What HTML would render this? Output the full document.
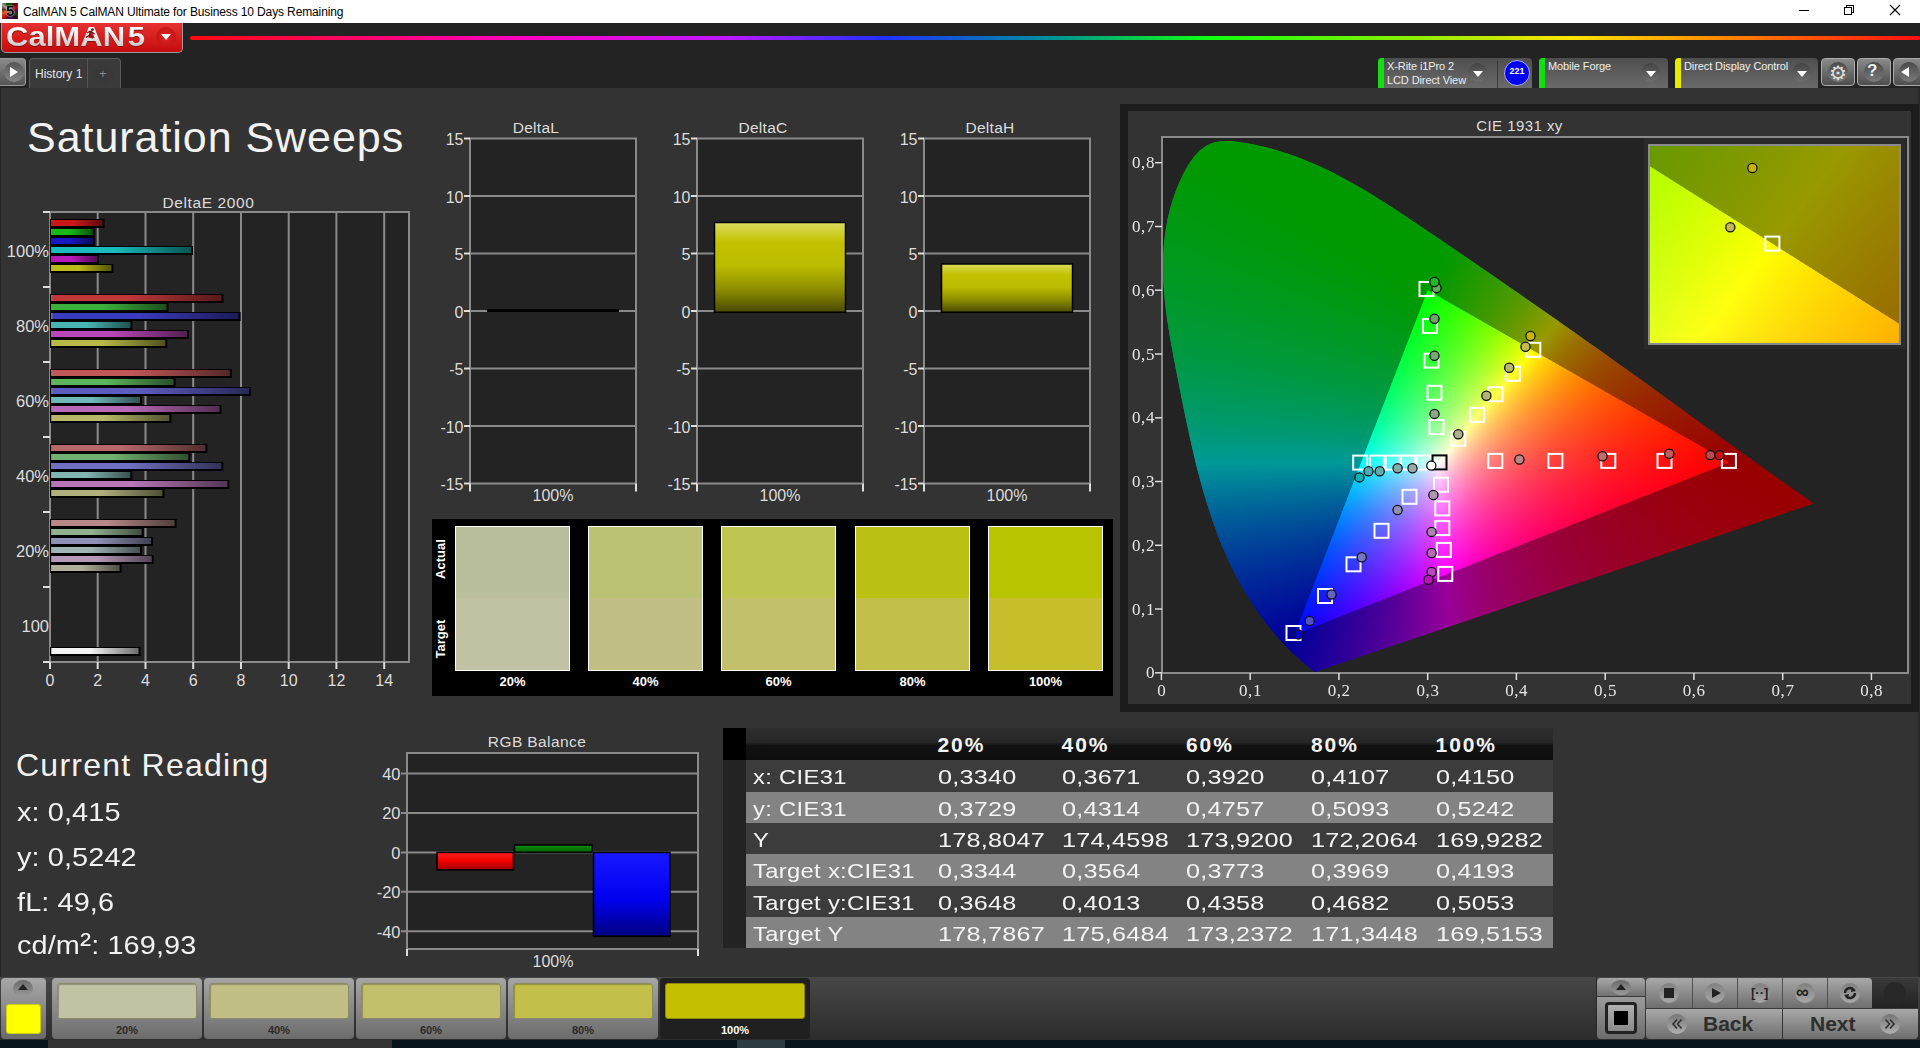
<!DOCTYPE html>
<html><head><meta charset="utf-8">
<style>
*{margin:0;padding:0;box-sizing:border-box}
html,body{width:1920px;height:1048px;overflow:hidden;background:#333;font-family:"Liberation Sans",sans-serif}
.a{position:absolute}
#titlebar{left:0;top:0;width:1920px;height:23px;background:#fff}
#hdr{left:0;top:23px;width:1920px;height:66px;background:#232323}
#main{left:0;top:88px;width:1920px;height:889px;background:#333;border-left:1px solid #262626;border-right:2px solid #2a2a2a}
.lbl{color:#ddd;font-size:14px;white-space:nowrap}
.ttl{color:#ddd;font-size:15px;white-space:nowrap}
</style></head><body>

<!-- TITLE BAR -->
<div id="titlebar" class="a">
  <div class="a" style="left:2px;top:3px;width:16px;height:16px;background:conic-gradient(from 200deg,#501010,#d01010,#e06020,#503030,#a0a0a0,#104010,#005000,#600010,#d00020,#600040,#104010,#300000,#301080,#501010)"></div>
  <div class="a" style="left:6px;top:2px;font:bold 15px 'Liberation Sans';color:#000;text-shadow:0 0 2px #dfd,0 0 1px #fff">5</div>
  <div class="a" style="left:23px;top:5px;font-size:12px;color:#000;white-space:nowrap;letter-spacing:-0.13px">CalMAN 5 CalMAN Ultimate for Business 10 Days Remaining</div>
  <div class="a" style="left:1799px;top:10px;width:10px;height:1px;background:#000"></div>
  <div class="a" style="left:1846px;top:5px;width:8px;height:8px;border:1px solid #000"></div>
  <div class="a" style="left:1844px;top:7px;width:8px;height:8px;border:1px solid #000;background:#fff"></div>
  <svg class="a" style="left:1889px;top:4px" width="12" height="12"><path d="M1 1L11 11M11 1L1 11" stroke="#000" stroke-width="1.1"/></svg>
</div>

<!-- HEADER -->
<div id="hdr" class="a">
  <div class="a" style="left:1px;top:0;width:182px;height:30px;border-radius:0 0 5px 5px;background:linear-gradient(#e43232,#d41a1a 60%,#c40c0c);border:1px solid #9a9a9a;border-top:none"></div>
  <div class="a" style="left:6px;top:-1px;font:bold 27.5px 'Liberation Sans';line-height:32px;color:#8a0a0a;transform:scaleX(1.13);transform-origin:0 0;white-space:nowrap">CalMAN&#8202;5</div>
  <div class="a" style="left:6px;top:-2px;font:bold 27.5px 'Liberation Sans';line-height:32px;transform:scaleX(1.13);transform-origin:0 0;white-space:nowrap;background:linear-gradient(#fcfcfc 30%,#c4c4c4 85%);-webkit-background-clip:text;background-clip:text;-webkit-text-fill-color:transparent;color:transparent">CalMAN&#8202;5</div>
  <svg class="a" style="left:84px;top:5px" width="12" height="11" viewBox="0 0 12 11"><circle cx="8.5" cy="1.6" r="1.4" fill="#7a0a0a"/><path d="M3 5L6 3.2L8.5 4.5L10.5 6M6.5 3.5L5.5 7L2 9.5M5.5 7L8 8.5L8.5 10.5" stroke="#7a0a0a" stroke-width="1.4" fill="none"/></svg>
  <div class="a" style="left:156px;top:4px;width:20px;height:20px;border-radius:50%;background:radial-gradient(#d22,#b11)"></div>
  <svg class="a" style="left:160px;top:10px" width="12" height="8"><path d="M1 1L11 1L6 7Z" fill="#fff"/></svg>
  <div class="a" style="left:190px;top:13px;width:1730px;height:4px;border-radius:2px;background:linear-gradient(90deg,#ff0a10 0%,#ff00c0 19%,#c018ff 31%,#2030ff 40%,#00909a 49.7%,#10ff10 58.8%,#a8ec00 73.3%,#ffe400 79.8%,#ff8400 89%,#ff1010 100%)"></div>
  <!-- tab row -->
  <div class="a" style="left:0;top:35px;width:26px;height:28px;border-radius:0 4px 4px 0;background:linear-gradient(#8a8a8a,#555);border:1px solid #999;border-left:none"></div>
  <div class="a" style="left:4px;top:39px;width:20px;height:20px;border-radius:50%;background:linear-gradient(#555,#888)"></div>
  <svg class="a" style="left:9px;top:43px" width="10" height="12"><path d="M1 1L9 6L1 11Z" fill="#fff"/></svg>
  <div class="a" style="left:29px;top:35px;width:92px;height:31px;border-radius:4px 4px 0 0;background:#3a3a3a;border:1px solid #5a5a5a;border-bottom:none"></div>
  <div class="a" style="left:87px;top:36px;width:1px;height:30px;background:#555"></div>
  <div class="a" style="left:35px;top:44px;font-size:12px;color:#e6e6e6">History 1</div>
  <div class="a" style="left:94px;top:42px;width:19px;height:19px;border-radius:50%;background:#383838"></div>
  <div class="a" style="left:99px;top:43px;font-size:13px;color:#888">+</div>
</div>

<div id="main" class="a"></div>
<div class="a" style="left:27px;top:113px;font-size:43px;color:#f2f2f2;white-space:nowrap;letter-spacing:0.95px">Saturation Sweeps</div>
<svg class="a" style="left:0;top:190px" width="430" height="520" viewBox="0 190 430 520"><defs><linearGradient id="de0" x1="0" x2="1" y1="0" y2="0"><stop offset="0" stop-color="#fff" stop-opacity="0.35"/><stop offset="0.01" stop-color="#c81818" stop-opacity="1"/><stop offset="0.45" stop-color="#c81818"/><stop offset="1" stop-color="#5a0a0a"/></linearGradient><linearGradient id="de1" x1="0" x2="1" y1="0" y2="0"><stop offset="0" stop-color="#fff" stop-opacity="0.35"/><stop offset="0.01" stop-color="#18b818" stop-opacity="1"/><stop offset="0.45" stop-color="#18b818"/><stop offset="1" stop-color="#0a520a"/></linearGradient><linearGradient id="de2" x1="0" x2="1" y1="0" y2="0"><stop offset="0" stop-color="#fff" stop-opacity="0.35"/><stop offset="0.01" stop-color="#1818c4" stop-opacity="1"/><stop offset="0.45" stop-color="#1818c4"/><stop offset="1" stop-color="#0a0a58"/></linearGradient><linearGradient id="de3" x1="0" x2="1" y1="0" y2="0"><stop offset="0" stop-color="#fff" stop-opacity="0.35"/><stop offset="0.01" stop-color="#18bcbc" stop-opacity="1"/><stop offset="0.45" stop-color="#18bcbc"/><stop offset="1" stop-color="#0a5454"/></linearGradient><linearGradient id="de4" x1="0" x2="1" y1="0" y2="0"><stop offset="0" stop-color="#fff" stop-opacity="0.35"/><stop offset="0.01" stop-color="#b818b8" stop-opacity="1"/><stop offset="0.45" stop-color="#b818b8"/><stop offset="1" stop-color="#520a52"/></linearGradient><linearGradient id="de5" x1="0" x2="1" y1="0" y2="0"><stop offset="0" stop-color="#fff" stop-opacity="0.35"/><stop offset="0.01" stop-color="#bcbc18" stop-opacity="1"/><stop offset="0.45" stop-color="#bcbc18"/><stop offset="1" stop-color="#54540a"/></linearGradient><linearGradient id="de6" x1="0" x2="1" y1="0" y2="0"><stop offset="0" stop-color="#fff" stop-opacity="0.35"/><stop offset="0.01" stop-color="#c03838" stop-opacity="1"/><stop offset="0.45" stop-color="#c03838"/><stop offset="1" stop-color="#561919"/></linearGradient><linearGradient id="de7" x1="0" x2="1" y1="0" y2="0"><stop offset="0" stop-color="#fff" stop-opacity="0.35"/><stop offset="0.01" stop-color="#3cb03c" stop-opacity="1"/><stop offset="0.45" stop-color="#3cb03c"/><stop offset="1" stop-color="#1b4f1b"/></linearGradient><linearGradient id="de8" x1="0" x2="1" y1="0" y2="0"><stop offset="0" stop-color="#fff" stop-opacity="0.35"/><stop offset="0.01" stop-color="#3c3cc0" stop-opacity="1"/><stop offset="0.45" stop-color="#3c3cc0"/><stop offset="1" stop-color="#1b1b56"/></linearGradient><linearGradient id="de9" x1="0" x2="1" y1="0" y2="0"><stop offset="0" stop-color="#fff" stop-opacity="0.35"/><stop offset="0.01" stop-color="#48b4b4" stop-opacity="1"/><stop offset="0.45" stop-color="#48b4b4"/><stop offset="1" stop-color="#205151"/></linearGradient><linearGradient id="de10" x1="0" x2="1" y1="0" y2="0"><stop offset="0" stop-color="#fff" stop-opacity="0.35"/><stop offset="0.01" stop-color="#b848b8" stop-opacity="1"/><stop offset="0.45" stop-color="#b848b8"/><stop offset="1" stop-color="#522052"/></linearGradient><linearGradient id="de11" x1="0" x2="1" y1="0" y2="0"><stop offset="0" stop-color="#fff" stop-opacity="0.35"/><stop offset="0.01" stop-color="#b8b848" stop-opacity="1"/><stop offset="0.45" stop-color="#b8b848"/><stop offset="1" stop-color="#525220"/></linearGradient><linearGradient id="de12" x1="0" x2="1" y1="0" y2="0"><stop offset="0" stop-color="#fff" stop-opacity="0.35"/><stop offset="0.01" stop-color="#c05858" stop-opacity="1"/><stop offset="0.45" stop-color="#c05858"/><stop offset="1" stop-color="#562727"/></linearGradient><linearGradient id="de13" x1="0" x2="1" y1="0" y2="0"><stop offset="0" stop-color="#fff" stop-opacity="0.35"/><stop offset="0.01" stop-color="#5cb45c" stop-opacity="1"/><stop offset="0.45" stop-color="#5cb45c"/><stop offset="1" stop-color="#295129"/></linearGradient><linearGradient id="de14" x1="0" x2="1" y1="0" y2="0"><stop offset="0" stop-color="#fff" stop-opacity="0.35"/><stop offset="0.01" stop-color="#5c5cc0" stop-opacity="1"/><stop offset="0.45" stop-color="#5c5cc0"/><stop offset="1" stop-color="#292956"/></linearGradient><linearGradient id="de15" x1="0" x2="1" y1="0" y2="0"><stop offset="0" stop-color="#fff" stop-opacity="0.35"/><stop offset="0.01" stop-color="#70b8b8" stop-opacity="1"/><stop offset="0.45" stop-color="#70b8b8"/><stop offset="1" stop-color="#325252"/></linearGradient><linearGradient id="de16" x1="0" x2="1" y1="0" y2="0"><stop offset="0" stop-color="#fff" stop-opacity="0.35"/><stop offset="0.01" stop-color="#b868b8" stop-opacity="1"/><stop offset="0.45" stop-color="#b868b8"/><stop offset="1" stop-color="#522e52"/></linearGradient><linearGradient id="de17" x1="0" x2="1" y1="0" y2="0"><stop offset="0" stop-color="#fff" stop-opacity="0.35"/><stop offset="0.01" stop-color="#b8b868" stop-opacity="1"/><stop offset="0.45" stop-color="#b8b868"/><stop offset="1" stop-color="#52522e"/></linearGradient><linearGradient id="de18" x1="0" x2="1" y1="0" y2="0"><stop offset="0" stop-color="#fff" stop-opacity="0.35"/><stop offset="0.01" stop-color="#b86868" stop-opacity="1"/><stop offset="0.45" stop-color="#b86868"/><stop offset="1" stop-color="#522e2e"/></linearGradient><linearGradient id="de19" x1="0" x2="1" y1="0" y2="0"><stop offset="0" stop-color="#fff" stop-opacity="0.35"/><stop offset="0.01" stop-color="#70b070" stop-opacity="1"/><stop offset="0.45" stop-color="#70b070"/><stop offset="1" stop-color="#324f32"/></linearGradient><linearGradient id="de20" x1="0" x2="1" y1="0" y2="0"><stop offset="0" stop-color="#fff" stop-opacity="0.35"/><stop offset="0.01" stop-color="#7070c0" stop-opacity="1"/><stop offset="0.45" stop-color="#7070c0"/><stop offset="1" stop-color="#323256"/></linearGradient><linearGradient id="de21" x1="0" x2="1" y1="0" y2="0"><stop offset="0" stop-color="#fff" stop-opacity="0.35"/><stop offset="0.01" stop-color="#80b4b0" stop-opacity="1"/><stop offset="0.45" stop-color="#80b4b0"/><stop offset="1" stop-color="#39514f"/></linearGradient><linearGradient id="de22" x1="0" x2="1" y1="0" y2="0"><stop offset="0" stop-color="#fff" stop-opacity="0.35"/><stop offset="0.01" stop-color="#b878b8" stop-opacity="1"/><stop offset="0.45" stop-color="#b878b8"/><stop offset="1" stop-color="#523652"/></linearGradient><linearGradient id="de23" x1="0" x2="1" y1="0" y2="0"><stop offset="0" stop-color="#fff" stop-opacity="0.35"/><stop offset="0.01" stop-color="#b0b07c" stop-opacity="1"/><stop offset="0.45" stop-color="#b0b07c"/><stop offset="1" stop-color="#4f4f37"/></linearGradient><linearGradient id="de24" x1="0" x2="1" y1="0" y2="0"><stop offset="0" stop-color="#fff" stop-opacity="0.35"/><stop offset="0.01" stop-color="#b88888" stop-opacity="1"/><stop offset="0.45" stop-color="#b88888"/><stop offset="1" stop-color="#523d3d"/></linearGradient><linearGradient id="de25" x1="0" x2="1" y1="0" y2="0"><stop offset="0" stop-color="#fff" stop-opacity="0.35"/><stop offset="0.01" stop-color="#90b090" stop-opacity="1"/><stop offset="0.45" stop-color="#90b090"/><stop offset="1" stop-color="#404f40"/></linearGradient><linearGradient id="de26" x1="0" x2="1" y1="0" y2="0"><stop offset="0" stop-color="#fff" stop-opacity="0.35"/><stop offset="0.01" stop-color="#9090b8" stop-opacity="1"/><stop offset="0.45" stop-color="#9090b8"/><stop offset="1" stop-color="#404052"/></linearGradient><linearGradient id="de27" x1="0" x2="1" y1="0" y2="0"><stop offset="0" stop-color="#fff" stop-opacity="0.35"/><stop offset="0.01" stop-color="#a0b4b4" stop-opacity="1"/><stop offset="0.45" stop-color="#a0b4b4"/><stop offset="1" stop-color="#485151"/></linearGradient><linearGradient id="de28" x1="0" x2="1" y1="0" y2="0"><stop offset="0" stop-color="#fff" stop-opacity="0.35"/><stop offset="0.01" stop-color="#b898b8" stop-opacity="1"/><stop offset="0.45" stop-color="#b898b8"/><stop offset="1" stop-color="#524452"/></linearGradient><linearGradient id="de29" x1="0" x2="1" y1="0" y2="0"><stop offset="0" stop-color="#fff" stop-opacity="0.35"/><stop offset="0.01" stop-color="#b0b098" stop-opacity="1"/><stop offset="0.45" stop-color="#b0b098"/><stop offset="1" stop-color="#4f4f44"/></linearGradient><linearGradient id="de30" x1="0" x2="1" y1="0" y2="0"><stop offset="0" stop-color="#fff" stop-opacity="0.35"/><stop offset="0.01" stop-color="#f4f4f4" stop-opacity="1"/><stop offset="0.45" stop-color="#f4f4f4"/><stop offset="1" stop-color="#6d6d6d"/></linearGradient></defs><rect x="50" y="212" width="359" height="450" fill="#232323"/><line x1="97.7" y1="211" x2="97.7" y2="663" stroke="#8a8a8a" stroke-width="2"/><line x1="145.5" y1="211" x2="145.5" y2="663" stroke="#8a8a8a" stroke-width="2"/><line x1="193.2" y1="211" x2="193.2" y2="663" stroke="#8a8a8a" stroke-width="2"/><line x1="241.0" y1="211" x2="241.0" y2="663" stroke="#8a8a8a" stroke-width="2"/><line x1="288.7" y1="211" x2="288.7" y2="663" stroke="#8a8a8a" stroke-width="2"/><line x1="336.4" y1="211" x2="336.4" y2="663" stroke="#8a8a8a" stroke-width="2"/><line x1="384.2" y1="211" x2="384.2" y2="663" stroke="#8a8a8a" stroke-width="2"/><rect x="50" y="212" width="359" height="450" fill="none" stroke="#8a8a8a" stroke-width="2"/><line x1="43" y1="212.0" x2="50" y2="212.0" stroke="#ddd" stroke-width="2"/><line x1="43" y1="287.0" x2="50" y2="287.0" stroke="#ddd" stroke-width="2"/><line x1="43" y1="362.0" x2="50" y2="362.0" stroke="#ddd" stroke-width="2"/><line x1="43" y1="437.0" x2="50" y2="437.0" stroke="#ddd" stroke-width="2"/><line x1="43" y1="512.0" x2="50" y2="512.0" stroke="#ddd" stroke-width="2"/><line x1="43" y1="587.0" x2="50" y2="587.0" stroke="#ddd" stroke-width="2"/><line x1="43" y1="662.0" x2="50" y2="662.0" stroke="#ddd" stroke-width="2"/><line x1="50.0" y1="662" x2="50.0" y2="669" stroke="#ddd" stroke-width="2"/><text x="50.0" y="686" fill="#ddd" font-size="16" text-anchor="middle">0</text><line x1="97.7" y1="662" x2="97.7" y2="669" stroke="#ddd" stroke-width="2"/><text x="97.7" y="686" fill="#ddd" font-size="16" text-anchor="middle">2</text><line x1="145.5" y1="662" x2="145.5" y2="669" stroke="#ddd" stroke-width="2"/><text x="145.5" y="686" fill="#ddd" font-size="16" text-anchor="middle">4</text><line x1="193.2" y1="662" x2="193.2" y2="669" stroke="#ddd" stroke-width="2"/><text x="193.2" y="686" fill="#ddd" font-size="16" text-anchor="middle">6</text><line x1="241.0" y1="662" x2="241.0" y2="669" stroke="#ddd" stroke-width="2"/><text x="241.0" y="686" fill="#ddd" font-size="16" text-anchor="middle">8</text><line x1="288.7" y1="662" x2="288.7" y2="669" stroke="#ddd" stroke-width="2"/><text x="288.7" y="686" fill="#ddd" font-size="16" text-anchor="middle">10</text><line x1="336.4" y1="662" x2="336.4" y2="669" stroke="#ddd" stroke-width="2"/><text x="336.4" y="686" fill="#ddd" font-size="16" text-anchor="middle">12</text><line x1="384.2" y1="662" x2="384.2" y2="669" stroke="#ddd" stroke-width="2"/><text x="384.2" y="686" fill="#ddd" font-size="16" text-anchor="middle">14</text><rect x="50" y="219.0" width="54.5" height="9" fill="#000"/><rect x="51" y="220.0" width="51.5" height="6" fill="url(#de0)"/><rect x="50" y="228.0" width="44.8" height="9" fill="#000"/><rect x="51" y="229.0" width="41.8" height="6" fill="url(#de1)"/><rect x="50" y="237.0" width="45.0" height="9" fill="#000"/><rect x="51" y="238.0" width="42.0" height="6" fill="url(#de2)"/><rect x="50" y="246.0" width="143.0" height="9" fill="#000"/><rect x="51" y="247.0" width="140.0" height="6" fill="url(#de3)"/><rect x="50" y="255.0" width="49.0" height="9" fill="#000"/><rect x="51" y="256.0" width="46.0" height="6" fill="url(#de4)"/><rect x="50" y="264.0" width="63.4" height="9" fill="#000"/><rect x="51" y="265.0" width="60.4" height="6" fill="url(#de5)"/><rect x="50" y="294.0" width="173.5" height="9" fill="#000"/><rect x="51" y="295.0" width="170.5" height="6" fill="url(#de6)"/><rect x="50" y="303.0" width="118.5" height="9" fill="#000"/><rect x="51" y="304.0" width="115.5" height="6" fill="url(#de7)"/><rect x="50" y="312.0" width="190.6" height="9" fill="#000"/><rect x="51" y="313.0" width="187.6" height="6" fill="url(#de8)"/><rect x="50" y="321.0" width="82.4" height="9" fill="#000"/><rect x="51" y="322.0" width="79.4" height="6" fill="url(#de9)"/><rect x="50" y="330.0" width="139.0" height="9" fill="#000"/><rect x="51" y="331.0" width="136.0" height="6" fill="url(#de10)"/><rect x="50" y="339.0" width="117.3" height="9" fill="#000"/><rect x="51" y="340.0" width="114.3" height="6" fill="url(#de11)"/><rect x="50" y="369.0" width="181.8" height="9" fill="#000"/><rect x="51" y="370.0" width="178.8" height="6" fill="url(#de12)"/><rect x="50" y="378.0" width="125.6" height="9" fill="#000"/><rect x="51" y="379.0" width="122.6" height="6" fill="url(#de13)"/><rect x="50" y="387.0" width="201.0" height="9" fill="#000"/><rect x="51" y="388.0" width="198.0" height="6" fill="url(#de14)"/><rect x="50" y="396.0" width="92.0" height="9" fill="#000"/><rect x="51" y="397.0" width="89.0" height="6" fill="url(#de15)"/><rect x="50" y="405.0" width="171.5" height="9" fill="#000"/><rect x="51" y="406.0" width="168.5" height="6" fill="url(#de16)"/><rect x="50" y="414.0" width="121.4" height="9" fill="#000"/><rect x="51" y="415.0" width="118.4" height="6" fill="url(#de17)"/><rect x="50" y="444.0" width="157.4" height="9" fill="#000"/><rect x="51" y="445.0" width="154.4" height="6" fill="url(#de18)"/><rect x="50" y="453.0" width="140.3" height="9" fill="#000"/><rect x="51" y="454.0" width="137.3" height="6" fill="url(#de19)"/><rect x="50" y="462.0" width="173.3" height="9" fill="#000"/><rect x="51" y="463.0" width="170.3" height="6" fill="url(#de20)"/><rect x="50" y="471.0" width="82.3" height="9" fill="#000"/><rect x="51" y="472.0" width="79.3" height="6" fill="url(#de21)"/><rect x="50" y="480.0" width="179.4" height="9" fill="#000"/><rect x="51" y="481.0" width="176.4" height="6" fill="url(#de22)"/><rect x="50" y="489.0" width="114.4" height="9" fill="#000"/><rect x="51" y="490.0" width="111.4" height="6" fill="url(#de23)"/><rect x="50" y="519.0" width="126.6" height="9" fill="#000"/><rect x="51" y="520.0" width="123.6" height="6" fill="url(#de24)"/><rect x="50" y="528.0" width="93.6" height="9" fill="#000"/><rect x="51" y="529.0" width="90.6" height="6" fill="url(#de25)"/><rect x="50" y="537.0" width="103.0" height="9" fill="#000"/><rect x="51" y="538.0" width="100.0" height="6" fill="url(#de26)"/><rect x="50" y="546.0" width="92.0" height="9" fill="#000"/><rect x="51" y="547.0" width="89.0" height="6" fill="url(#de27)"/><rect x="50" y="555.0" width="103.7" height="9" fill="#000"/><rect x="51" y="556.0" width="100.7" height="6" fill="url(#de28)"/><rect x="50" y="564.0" width="71.6" height="9" fill="#000"/><rect x="51" y="565.0" width="68.6" height="6" fill="url(#de29)"/><rect x="50" y="647.0" width="90.5" height="9" fill="#000"/><rect x="51" y="648.0" width="87.5" height="6" fill="url(#de30)"/><text x="49" y="257.0" fill="#ddd" font-size="16.5" text-anchor="end">100%</text><text x="49" y="332.0" fill="#ddd" font-size="16.5" text-anchor="end">80%</text><text x="49" y="407.0" fill="#ddd" font-size="16.5" text-anchor="end">60%</text><text x="49" y="482.0" fill="#ddd" font-size="16.5" text-anchor="end">40%</text><text x="49" y="557.0" fill="#ddd" font-size="16.5" text-anchor="end">20%</text><text x="49" y="632.0" fill="#ddd" font-size="16.5" text-anchor="end">100</text><text x="208.5" y="207.5" fill="#ddd" font-size="15.5" letter-spacing="0.6" text-anchor="middle">DeltaE 2000</text></svg>
<svg class="a" style="left:430px;top:110px" width="226" height="400" viewBox="430 110 226 400"><defs><linearGradient id="gbDeltaL" x1="0" x2="0" y1="0" y2="1"><stop offset="0" stop-color="#dcdc60"/><stop offset="0.22" stop-color="#c2c200"/><stop offset="0.48" stop-color="#bcbc00"/><stop offset="0.75" stop-color="#8c8c00"/><stop offset="1" stop-color="#4a4a00"/></linearGradient></defs><rect x="470" y="138.5" width="166" height="345.0" fill="#232323"/><line x1="470" y1="196.0" x2="636" y2="196.0" stroke="#8a8a8a" stroke-width="2"/><line x1="470" y1="253.5" x2="636" y2="253.5" stroke="#8a8a8a" stroke-width="2"/><line x1="470" y1="311.0" x2="636" y2="311.0" stroke="#8a8a8a" stroke-width="2"/><line x1="470" y1="368.5" x2="636" y2="368.5" stroke="#8a8a8a" stroke-width="2"/><line x1="470" y1="426.0" x2="636" y2="426.0" stroke="#8a8a8a" stroke-width="2"/><rect x="470" y="138.5" width="166" height="345.0" fill="none" stroke="#8a8a8a" stroke-width="2"/><line x1="464" y1="138.5" x2="470" y2="138.5" stroke="#ddd" stroke-width="2"/><text x="463.5" y="145.3" fill="#ddd" font-size="16" text-anchor="end">15</text><line x1="464" y1="196.0" x2="470" y2="196.0" stroke="#ddd" stroke-width="2"/><text x="463.5" y="202.8" fill="#ddd" font-size="16" text-anchor="end">10</text><line x1="464" y1="253.5" x2="470" y2="253.5" stroke="#ddd" stroke-width="2"/><text x="463.5" y="260.3" fill="#ddd" font-size="16" text-anchor="end">5</text><line x1="464" y1="311.0" x2="470" y2="311.0" stroke="#ddd" stroke-width="2"/><text x="463.5" y="317.8" fill="#ddd" font-size="16" text-anchor="end">0</text><line x1="464" y1="368.5" x2="470" y2="368.5" stroke="#ddd" stroke-width="2"/><text x="463.5" y="375.3" fill="#ddd" font-size="16" text-anchor="end">-5</text><line x1="464" y1="426.0" x2="470" y2="426.0" stroke="#ddd" stroke-width="2"/><text x="463.5" y="432.8" fill="#ddd" font-size="16" text-anchor="end">-10</text><line x1="464" y1="483.5" x2="470" y2="483.5" stroke="#ddd" stroke-width="2"/><text x="463.5" y="490.3" fill="#ddd" font-size="16" text-anchor="end">-15</text><line x1="470" y1="483.5" x2="470" y2="491.5" stroke="#ddd" stroke-width="2"/><line x1="636" y1="483.5" x2="636" y2="491.5" stroke="#ddd" stroke-width="2"/><text x="536.0" y="133" fill="#ddd" font-size="15.5" letter-spacing="0.3" text-anchor="middle">DeltaL</text><text x="553.0" y="501" fill="#ddd" font-size="16" text-anchor="middle">100%</text><rect x="487" y="309" width="132" height="3" fill="#000"/></svg>
<svg class="a" style="left:657px;top:110px" width="226" height="400" viewBox="657 110 226 400"><defs><linearGradient id="gbDeltaC" x1="0" x2="0" y1="0" y2="1"><stop offset="0" stop-color="#dcdc60"/><stop offset="0.22" stop-color="#c2c200"/><stop offset="0.48" stop-color="#bcbc00"/><stop offset="0.75" stop-color="#8c8c00"/><stop offset="1" stop-color="#4a4a00"/></linearGradient></defs><rect x="697" y="138.5" width="166" height="345.0" fill="#232323"/><line x1="697" y1="196.0" x2="863" y2="196.0" stroke="#8a8a8a" stroke-width="2"/><line x1="697" y1="253.5" x2="863" y2="253.5" stroke="#8a8a8a" stroke-width="2"/><line x1="697" y1="311.0" x2="863" y2="311.0" stroke="#8a8a8a" stroke-width="2"/><line x1="697" y1="368.5" x2="863" y2="368.5" stroke="#8a8a8a" stroke-width="2"/><line x1="697" y1="426.0" x2="863" y2="426.0" stroke="#8a8a8a" stroke-width="2"/><rect x="697" y="138.5" width="166" height="345.0" fill="none" stroke="#8a8a8a" stroke-width="2"/><line x1="691" y1="138.5" x2="697" y2="138.5" stroke="#ddd" stroke-width="2"/><text x="690.5" y="145.3" fill="#ddd" font-size="16" text-anchor="end">15</text><line x1="691" y1="196.0" x2="697" y2="196.0" stroke="#ddd" stroke-width="2"/><text x="690.5" y="202.8" fill="#ddd" font-size="16" text-anchor="end">10</text><line x1="691" y1="253.5" x2="697" y2="253.5" stroke="#ddd" stroke-width="2"/><text x="690.5" y="260.3" fill="#ddd" font-size="16" text-anchor="end">5</text><line x1="691" y1="311.0" x2="697" y2="311.0" stroke="#ddd" stroke-width="2"/><text x="690.5" y="317.8" fill="#ddd" font-size="16" text-anchor="end">0</text><line x1="691" y1="368.5" x2="697" y2="368.5" stroke="#ddd" stroke-width="2"/><text x="690.5" y="375.3" fill="#ddd" font-size="16" text-anchor="end">-5</text><line x1="691" y1="426.0" x2="697" y2="426.0" stroke="#ddd" stroke-width="2"/><text x="690.5" y="432.8" fill="#ddd" font-size="16" text-anchor="end">-10</text><line x1="691" y1="483.5" x2="697" y2="483.5" stroke="#ddd" stroke-width="2"/><text x="690.5" y="490.3" fill="#ddd" font-size="16" text-anchor="end">-15</text><line x1="697" y1="483.5" x2="697" y2="491.5" stroke="#ddd" stroke-width="2"/><line x1="863" y1="483.5" x2="863" y2="491.5" stroke="#ddd" stroke-width="2"/><text x="763.0" y="133" fill="#ddd" font-size="15.5" letter-spacing="0.3" text-anchor="middle">DeltaC</text><text x="780.0" y="501" fill="#ddd" font-size="16" text-anchor="middle">100%</text><rect x="714.5" y="222.5" width="131" height="89.7" fill="url(#gbDeltaC)" stroke="#000" stroke-width="1.5"/></svg>
<svg class="a" style="left:884px;top:110px" width="226" height="400" viewBox="884 110 226 400"><defs><linearGradient id="gbDeltaH" x1="0" x2="0" y1="0" y2="1"><stop offset="0" stop-color="#dcdc60"/><stop offset="0.22" stop-color="#c2c200"/><stop offset="0.48" stop-color="#bcbc00"/><stop offset="0.75" stop-color="#8c8c00"/><stop offset="1" stop-color="#4a4a00"/></linearGradient></defs><rect x="924" y="138.5" width="166" height="345.0" fill="#232323"/><line x1="924" y1="196.0" x2="1090" y2="196.0" stroke="#8a8a8a" stroke-width="2"/><line x1="924" y1="253.5" x2="1090" y2="253.5" stroke="#8a8a8a" stroke-width="2"/><line x1="924" y1="311.0" x2="1090" y2="311.0" stroke="#8a8a8a" stroke-width="2"/><line x1="924" y1="368.5" x2="1090" y2="368.5" stroke="#8a8a8a" stroke-width="2"/><line x1="924" y1="426.0" x2="1090" y2="426.0" stroke="#8a8a8a" stroke-width="2"/><rect x="924" y="138.5" width="166" height="345.0" fill="none" stroke="#8a8a8a" stroke-width="2"/><line x1="918" y1="138.5" x2="924" y2="138.5" stroke="#ddd" stroke-width="2"/><text x="917.5" y="145.3" fill="#ddd" font-size="16" text-anchor="end">15</text><line x1="918" y1="196.0" x2="924" y2="196.0" stroke="#ddd" stroke-width="2"/><text x="917.5" y="202.8" fill="#ddd" font-size="16" text-anchor="end">10</text><line x1="918" y1="253.5" x2="924" y2="253.5" stroke="#ddd" stroke-width="2"/><text x="917.5" y="260.3" fill="#ddd" font-size="16" text-anchor="end">5</text><line x1="918" y1="311.0" x2="924" y2="311.0" stroke="#ddd" stroke-width="2"/><text x="917.5" y="317.8" fill="#ddd" font-size="16" text-anchor="end">0</text><line x1="918" y1="368.5" x2="924" y2="368.5" stroke="#ddd" stroke-width="2"/><text x="917.5" y="375.3" fill="#ddd" font-size="16" text-anchor="end">-5</text><line x1="918" y1="426.0" x2="924" y2="426.0" stroke="#ddd" stroke-width="2"/><text x="917.5" y="432.8" fill="#ddd" font-size="16" text-anchor="end">-10</text><line x1="918" y1="483.5" x2="924" y2="483.5" stroke="#ddd" stroke-width="2"/><text x="917.5" y="490.3" fill="#ddd" font-size="16" text-anchor="end">-15</text><line x1="924" y1="483.5" x2="924" y2="491.5" stroke="#ddd" stroke-width="2"/><line x1="1090" y1="483.5" x2="1090" y2="491.5" stroke="#ddd" stroke-width="2"/><text x="990.0" y="133" fill="#ddd" font-size="15.5" letter-spacing="0.3" text-anchor="middle">DeltaH</text><text x="1007.0" y="501" fill="#ddd" font-size="16" text-anchor="middle">100%</text><rect x="941.5" y="264.0" width="131" height="48.2" fill="url(#gbDeltaH)" stroke="#000" stroke-width="1.5"/></svg>
<div class="a" style="left:432px;top:519px;width:681px;height:177px;background:#000"></div>
<div class="a" style="left:455px;top:526px;width:115px;height:145px;border:1px solid #fff;background:linear-gradient(#b9bf9c 0,#b9bf9c 50%,#c1c1a4 50%,#c1c1a4 100%)"></div>
<div class="a" style="left:455px;top:674px;width:115px;text-align:center;font:bold 13px 'Liberation Sans';color:#fff">20%</div>
<div class="a" style="left:588px;top:526px;width:115px;height:145px;border:1px solid #fff;background:linear-gradient(#bcc273 0,#bcc273 50%,#c1bf86 50%,#c1bf86 100%)"></div>
<div class="a" style="left:588px;top:674px;width:115px;text-align:center;font:bold 13px 'Liberation Sans';color:#fff">40%</div>
<div class="a" style="left:721px;top:526px;width:115px;height:145px;border:1px solid #fff;background:linear-gradient(#bec550 0,#bec550 50%,#c2c06c 50%,#c2c06c 100%)"></div>
<div class="a" style="left:721px;top:674px;width:115px;text-align:center;font:bold 13px 'Liberation Sans';color:#fff">60%</div>
<div class="a" style="left:855px;top:526px;width:115px;height:145px;border:1px solid #fff;background:linear-gradient(#bbc112 0,#bbc112 50%,#c2c04a 50%,#c2c04a 100%)"></div>
<div class="a" style="left:855px;top:674px;width:115px;text-align:center;font:bold 13px 'Liberation Sans';color:#fff">80%</div>
<div class="a" style="left:988px;top:526px;width:115px;height:145px;border:1px solid #fff;background:linear-gradient(#b9c400 0,#b9c400 50%,#c6bf2b 50%,#c6bf2b 100%)"></div>
<div class="a" style="left:988px;top:674px;width:115px;text-align:center;font:bold 13px 'Liberation Sans';color:#fff">100%</div>
<div class="a" style="left:434px;top:551px;width:16px;height:16px;transform:rotate(-90deg);transform-origin:50% 50%;"><div style="position:absolute;left:-22px;top:-1px;width:60px;text-align:center;font:bold 13px 'Liberation Sans';color:#fff">Actual</div></div>
<div class="a" style="left:434px;top:631px;width:16px;height:16px;transform:rotate(-90deg);transform-origin:50% 50%;"><div style="position:absolute;left:-22px;top:-1px;width:60px;text-align:center;font:bold 13px 'Liberation Sans';color:#fff">Target</div></div>
<div class="a" style="left:1120px;top:104px;width:799px;height:608px;background:#1c1c1c"></div>
<div class="a" style="left:1128px;top:111px;width:783px;height:593px;background:#333"></div>
<div class="a" style="left:1120px;top:117px;width:799px;text-align:center;font-size:15px;color:#ddd;letter-spacing:0.45px">CIE 1931 xy</div>
<div class="a" style="left:1161px;top:136px;width:748px;height:538px;border:2px solid #8a8a8a;background:#232323"></div>
<svg class="a" style="left:1163px;top:138px" width="744" height="534" viewBox="1163 138 744 534">
<defs><clipPath id="hs"><path d="M1314.8 671.9 L1307.1 665.7 L1299.7 659.3 L1292.6 652.7 L1285.9 645.9 L1279.4 639.0 L1273.2 632.0 L1267.4 624.8 L1261.8 617.4 L1256.4 609.9 L1251.3 602.3 L1246.5 594.6 L1241.9 586.7 L1237.5 578.7 L1233.3 570.6 L1229.3 562.4 L1225.6 554.1 L1222.0 545.7 L1218.6 537.2 L1215.4 528.6 L1212.3 519.9 L1209.4 511.1 L1206.6 502.3 L1203.9 493.4 L1201.4 484.5 L1199.0 475.4 L1196.6 466.4 L1194.4 457.3 L1192.3 448.1 L1190.2 438.9 L1188.2 429.7 L1186.2 420.4 L1184.3 411.2 L1182.4 401.9 L1180.5 392.6 L1178.7 383.3 L1176.9 374.0 L1175.0 364.6 L1173.3 355.3 L1171.6 346.0 L1169.9 336.7 L1168.4 327.5 L1167.0 318.2 L1165.8 308.9 L1164.8 299.7 L1164.0 290.5 L1163.4 281.3 L1163.1 272.1 L1163.0 263.0 L1163.3 253.9 L1163.9 244.8 L1164.9 235.7 L1166.2 226.7 L1167.9 217.7 L1170.1 208.8 L1172.7 199.9 L1175.8 191.1 L1179.4 182.2 L1183.5 173.5 L1188.2 165.1 L1193.6 157.3 L1199.7 150.6 L1206.6 145.5 L1214.5 142.2 L1223.2 141.0 L1232.4 141.3 L1241.8 142.5 L1251.1 144.0 L1260.3 145.9 L1269.3 148.1 L1278.3 150.7 L1287.1 153.5 L1295.9 156.6 L1304.5 159.9 L1313.1 163.5 L1321.6 167.3 L1330.0 171.3 L1338.3 175.5 L1346.5 179.9 L1354.7 184.4 L1362.8 189.1 L1370.9 194.0 L1378.9 198.9 L1386.8 203.9 L1394.7 209.0 L1402.6 214.2 L1410.4 219.4 L1418.2 224.7 L1426.0 230.0 L1433.8 235.2 L1441.5 240.5 L1449.2 245.8 L1457.0 251.0 L1464.7 256.3 L1472.3 261.6 L1480.0 266.8 L1487.7 272.1 L1495.3 277.3 L1502.9 282.6 L1510.6 287.9 L1518.2 293.1 L1525.8 298.4 L1533.4 303.7 L1541.0 309.0 L1548.5 314.3 L1556.1 319.6 L1563.7 324.9 L1571.3 330.2 L1578.8 335.5 L1586.4 340.9 L1594.0 346.2 L1601.5 351.6 L1609.1 357.0 L1616.6 362.4 L1624.2 367.8 L1631.8 373.2 L1639.3 378.6 L1646.9 384.1 L1654.5 389.5 L1662.0 395.0 L1669.6 400.5 L1677.2 406.0 L1684.8 411.4 L1692.3 416.9 L1699.9 422.4 L1707.5 427.9 L1715.0 433.3 L1722.6 438.8 L1730.2 444.3 L1737.8 449.7 L1745.3 455.2 L1752.9 460.6 L1760.5 466.0 L1768.0 471.4 L1775.6 476.8 L1783.2 482.2 L1790.7 487.5 L1798.3 492.8 L1805.9 498.1 L1813.4 503.4 Z"/></clipPath><clipPath id="tr"><path d="M1729.4 462.4 L1427.7 290.2 L1294.5 634.5 Z"/></clipPath><filter id="bl" x="-5%" y="-5%" width="110%" height="110%"><feGaussianBlur stdDeviation="6"/></filter></defs>
<g clip-path="url(#hs)"><g filter="url(#bl)">
<rect x=1163 y=118 width=20 height=20 fill=#009900 />
<rect x=1183 y=118 width=20 height=20 fill=#009900 />
<rect x=1203 y=118 width=20 height=20 fill=#009900 />
<rect x=1223 y=118 width=20 height=20 fill=#009900 />
<rect x=1243 y=118 width=20 height=20 fill=#009900 />
<rect x=1263 y=118 width=20 height=20 fill=#009900 />
<rect x=1283 y=118 width=20 height=20 fill=#009900 />
<rect x=1303 y=118 width=20 height=20 fill=#009900 />
<rect x=1143 y=138 width=20 height=20 fill=#009902 />
<rect x=1163 y=138 width=20 height=20 fill=#009900 />
<rect x=1183 y=138 width=20 height=20 fill=#009900 />
<rect x=1203 y=138 width=20 height=20 fill=#009900 />
<rect x=1223 y=138 width=20 height=20 fill=#009900 />
<rect x=1243 y=138 width=20 height=20 fill=#009900 />
<rect x=1263 y=138 width=20 height=20 fill=#009900 />
<rect x=1283 y=138 width=20 height=20 fill=#009900 />
<rect x=1303 y=138 width=20 height=20 fill=#009900 />
<rect x=1323 y=138 width=20 height=20 fill=#009900 />
<rect x=1343 y=138 width=20 height=20 fill=#009900 />
<rect x=1143 y=158 width=20 height=20 fill=#009906 />
<rect x=1163 y=158 width=20 height=20 fill=#009904 />
<rect x=1183 y=158 width=20 height=20 fill=#009902 />
<rect x=1203 y=158 width=20 height=20 fill=#009900 />
<rect x=1223 y=158 width=20 height=20 fill=#009900 />
<rect x=1243 y=158 width=20 height=20 fill=#009900 />
<rect x=1263 y=158 width=20 height=20 fill=#009900 />
<rect x=1283 y=158 width=20 height=20 fill=#009900 />
<rect x=1303 y=158 width=20 height=20 fill=#009900 />
<rect x=1323 y=158 width=20 height=20 fill=#009900 />
<rect x=1343 y=158 width=20 height=20 fill=#009900 />
<rect x=1363 y=158 width=20 height=20 fill=#009900 />
<rect x=1383 y=158 width=20 height=20 fill=#009900 />
<rect x=1143 y=178 width=20 height=20 fill=#00990b />
<rect x=1163 y=178 width=20 height=20 fill=#009909 />
<rect x=1183 y=178 width=20 height=20 fill=#009906 />
<rect x=1203 y=178 width=20 height=20 fill=#009904 />
<rect x=1223 y=178 width=20 height=20 fill=#009901 />
<rect x=1243 y=178 width=20 height=20 fill=#009900 />
<rect x=1263 y=178 width=20 height=20 fill=#009900 />
<rect x=1283 y=178 width=20 height=20 fill=#009900 />
<rect x=1303 y=178 width=20 height=20 fill=#009900 />
<rect x=1323 y=178 width=20 height=20 fill=#009900 />
<rect x=1343 y=178 width=20 height=20 fill=#009900 />
<rect x=1363 y=178 width=20 height=20 fill=#009900 />
<rect x=1383 y=178 width=20 height=20 fill=#009900 />
<rect x=1403 y=178 width=20 height=20 fill=#009900 />
<rect x=1423 y=178 width=20 height=20 fill=#009900 />
<rect x=1143 y=198 width=20 height=20 fill=#009910 />
<rect x=1163 y=198 width=20 height=20 fill=#00990d />
<rect x=1183 y=198 width=20 height=20 fill=#00990b />
<rect x=1203 y=198 width=20 height=20 fill=#009909 />
<rect x=1223 y=198 width=20 height=20 fill=#009906 />
<rect x=1243 y=198 width=20 height=20 fill=#009904 />
<rect x=1263 y=198 width=20 height=20 fill=#009901 />
<rect x=1283 y=198 width=20 height=20 fill=#009900 />
<rect x=1303 y=198 width=20 height=20 fill=#009900 />
<rect x=1323 y=198 width=20 height=20 fill=#009900 />
<rect x=1343 y=198 width=20 height=20 fill=#009900 />
<rect x=1363 y=198 width=20 height=20 fill=#009900 />
<rect x=1383 y=198 width=20 height=20 fill=#009900 />
<rect x=1403 y=198 width=20 height=20 fill=#009900 />
<rect x=1423 y=198 width=20 height=20 fill=#009900 />
<rect x=1443 y=198 width=20 height=20 fill=#009900 />
<rect x=1143 y=218 width=20 height=20 fill=#009915 />
<rect x=1163 y=218 width=20 height=20 fill=#009913 />
<rect x=1183 y=218 width=20 height=20 fill=#009910 />
<rect x=1203 y=218 width=20 height=20 fill=#00990e />
<rect x=1223 y=218 width=20 height=20 fill=#00990b />
<rect x=1243 y=218 width=20 height=20 fill=#009909 />
<rect x=1263 y=218 width=20 height=20 fill=#009906 />
<rect x=1283 y=218 width=20 height=20 fill=#009903 />
<rect x=1303 y=218 width=20 height=20 fill=#009900 />
<rect x=1323 y=218 width=20 height=20 fill=#009900 />
<rect x=1343 y=218 width=20 height=20 fill=#009900 />
<rect x=1363 y=218 width=20 height=20 fill=#009900 />
<rect x=1383 y=218 width=20 height=20 fill=#009900 />
<rect x=1403 y=218 width=20 height=20 fill=#009900 />
<rect x=1423 y=218 width=20 height=20 fill=#009900 />
<rect x=1443 y=218 width=20 height=20 fill=#009900 />
<rect x=1463 y=218 width=20 height=20 fill=#0e9900 />
<rect x=1483 y=218 width=20 height=20 fill=#1c9900 />
<rect x=1143 y=238 width=20 height=20 fill=#00991b />
<rect x=1163 y=238 width=20 height=20 fill=#009918 />
<rect x=1183 y=238 width=20 height=20 fill=#009916 />
<rect x=1203 y=238 width=20 height=20 fill=#009914 />
<rect x=1223 y=238 width=20 height=20 fill=#009911 />
<rect x=1243 y=238 width=20 height=20 fill=#00990e />
<rect x=1263 y=238 width=20 height=20 fill=#00990c />
<rect x=1283 y=238 width=20 height=20 fill=#009909 />
<rect x=1303 y=238 width=20 height=20 fill=#009906 />
<rect x=1323 y=238 width=20 height=20 fill=#009903 />
<rect x=1343 y=238 width=20 height=20 fill=#009900 />
<rect x=1363 y=238 width=20 height=20 fill=#009900 />
<rect x=1383 y=238 width=20 height=20 fill=#009900 />
<rect x=1403 y=238 width=20 height=20 fill=#009900 />
<rect x=1423 y=238 width=20 height=20 fill=#009900 />
<rect x=1443 y=238 width=20 height=20 fill=#069900 />
<rect x=1463 y=238 width=20 height=20 fill=#149900 />
<rect x=1483 y=238 width=20 height=20 fill=#239900 />
<rect x=1503 y=238 width=20 height=20 fill=#339900 />
<rect x=1143 y=258 width=20 height=20 fill=#009921 />
<rect x=1163 y=258 width=20 height=20 fill=#00991f />
<rect x=1183 y=258 width=20 height=20 fill=#00991c />
<rect x=1203 y=258 width=20 height=20 fill=#00991a />
<rect x=1223 y=258 width=20 height=20 fill=#009917 />
<rect x=1243 y=258 width=20 height=20 fill=#009915 />
<rect x=1263 y=258 width=20 height=20 fill=#009912 />
<rect x=1283 y=258 width=20 height=20 fill=#00990f />
<rect x=1303 y=258 width=20 height=20 fill=#00990c />
<rect x=1323 y=258 width=20 height=20 fill=#009909 />
<rect x=1343 y=258 width=20 height=20 fill=#009906 />
<rect x=1363 y=258 width=20 height=20 fill=#009902 />
<rect x=1383 y=258 width=20 height=20 fill=#009900 />
<rect x=1403 y=258 width=20 height=20 fill=#009900 />
<rect x=1423 y=258 width=20 height=20 fill=#009900 />
<rect x=1443 y=258 width=20 height=20 fill=#0c9900 />
<rect x=1463 y=258 width=20 height=20 fill=#1b9900 />
<rect x=1483 y=258 width=20 height=20 fill=#2c9900 />
<rect x=1503 y=258 width=20 height=20 fill=#3d9900 />
<rect x=1523 y=258 width=20 height=20 fill=#4f9900 />
<rect x=1543 y=258 width=20 height=20 fill=#629900 />
<rect x=1143 y=278 width=20 height=20 fill=#009928 />
<rect x=1163 y=278 width=20 height=20 fill=#009926 />
<rect x=1183 y=278 width=20 height=20 fill=#009923 />
<rect x=1203 y=278 width=20 height=20 fill=#009921 />
<rect x=1223 y=278 width=20 height=20 fill=#00991e />
<rect x=1243 y=278 width=20 height=20 fill=#00991c />
<rect x=1263 y=278 width=20 height=20 fill=#009919 />
<rect x=1283 y=278 width=20 height=20 fill=#009916 />
<rect x=1303 y=278 width=20 height=20 fill=#009913 />
<rect x=1323 y=278 width=20 height=20 fill=#009910 />
<rect x=1343 y=278 width=20 height=20 fill=#00990d />
<rect x=1363 y=278 width=20 height=20 fill=#009909 />
<rect x=1383 y=278 width=20 height=20 fill=#009905 />
<rect x=1403 y=278 width=20 height=20 fill=#009902 />
<rect x=1423 y=278 width=20 height=20 fill=#039900 />
<rect x=1443 y=278 width=20 height=20 fill=#139900 />
<rect x=1463 y=278 width=20 height=20 fill=#249900 />
<rect x=1483 y=278 width=20 height=20 fill=#359900 />
<rect x=1503 y=278 width=20 height=20 fill=#489900 />
<rect x=1523 y=278 width=20 height=20 fill=#5c9900 />
<rect x=1543 y=278 width=20 height=20 fill=#729900 />
<rect x=1563 y=278 width=20 height=20 fill=#889900 />
<rect x=1143 y=298 width=20 height=20 fill=#00992f />
<rect x=1163 y=298 width=20 height=20 fill=#00992d />
<rect x=1183 y=298 width=20 height=20 fill=#00992b />
<rect x=1203 y=298 width=20 height=20 fill=#009929 />
<rect x=1223 y=298 width=20 height=20 fill=#009926 />
<rect x=1243 y=298 width=20 height=20 fill=#009924 />
<rect x=1263 y=298 width=20 height=20 fill=#009921 />
<rect x=1283 y=298 width=20 height=20 fill=#00991e />
<rect x=1303 y=298 width=20 height=20 fill=#00991b />
<rect x=1323 y=298 width=20 height=20 fill=#009918 />
<rect x=1343 y=298 width=20 height=20 fill=#009914 />
<rect x=1363 y=298 width=20 height=20 fill=#009911 />
<rect x=1383 y=298 width=20 height=20 fill=#00990d />
<rect x=1403 y=298 width=20 height=20 fill=#009909 />
<rect x=1423 y=298 width=20 height=20 fill=#0a9905 />
<rect x=1443 y=298 width=20 height=20 fill=#1b9901 />
<rect x=1463 y=298 width=20 height=20 fill=#2d9900 />
<rect x=1483 y=298 width=20 height=20 fill=#419900 />
<rect x=1503 y=298 width=20 height=20 fill=#569900 />
<rect x=1523 y=298 width=20 height=20 fill=#6c9900 />
<rect x=1543 y=298 width=20 height=20 fill=#849900 />
<rect x=1563 y=298 width=20 height=20 fill=#999400 />
<rect x=1583 y=298 width=20 height=20 fill=#997e00 />
<rect x=1143 y=318 width=20 height=20 fill=#009938 />
<rect x=1163 y=318 width=20 height=20 fill=#009936 />
<rect x=1183 y=318 width=20 height=20 fill=#009934 />
<rect x=1203 y=318 width=20 height=20 fill=#009931 />
<rect x=1223 y=318 width=20 height=20 fill=#00992f />
<rect x=1243 y=318 width=20 height=20 fill=#00992c />
<rect x=1263 y=318 width=20 height=20 fill=#00992a />
<rect x=1283 y=318 width=20 height=20 fill=#009927 />
<rect x=1303 y=318 width=20 height=20 fill=#009924 />
<rect x=1323 y=318 width=20 height=20 fill=#009921 />
<rect x=1343 y=318 width=20 height=20 fill=#00991d />
<rect x=1363 y=318 width=20 height=20 fill=#00991a />
<rect x=1383 y=318 width=20 height=20 fill=#009916 />
<rect x=1403 y=318 width=20 height=20 fill=#009912 />
<rect x=1423 y=318 width=20 height=20 fill=#11990e />
<rect x=1443 y=318 width=20 height=20 fill=#24990a />
<rect x=1463 y=318 width=20 height=20 fill=#389905 />
<rect x=1483 y=318 width=20 height=20 fill=#4e9900 />
<rect x=1503 y=318 width=20 height=20 fill=#659900 />
<rect x=1523 y=318 width=20 height=20 fill=#7e9900 />
<rect x=1543 y=318 width=20 height=20 fill=#999800 />
<rect x=1563 y=318 width=20 height=20 fill=#998000 />
<rect x=1583 y=318 width=20 height=20 fill=#996d00 />
<rect x=1603 y=318 width=20 height=20 fill=#995e00 />
<rect x=1623 y=318 width=20 height=20 fill=#995100 />
<rect x=1143 y=338 width=20 height=20 fill=#009941 />
<rect x=1163 y=338 width=20 height=20 fill=#00993f />
<rect x=1183 y=338 width=20 height=20 fill=#00993d />
<rect x=1203 y=338 width=20 height=20 fill=#00993b />
<rect x=1223 y=338 width=20 height=20 fill=#009939 />
<rect x=1243 y=338 width=20 height=20 fill=#009936 />
<rect x=1263 y=338 width=20 height=20 fill=#009934 />
<rect x=1283 y=338 width=20 height=20 fill=#009931 />
<rect x=1303 y=338 width=20 height=20 fill=#00992e />
<rect x=1323 y=338 width=20 height=20 fill=#00992b />
<rect x=1343 y=338 width=20 height=20 fill=#009928 />
<rect x=1363 y=338 width=20 height=20 fill=#009924 />
<rect x=1383 y=338 width=20 height=20 fill=#009920 />
<rect x=1403 y=338 width=20 height=20 fill=#07991d />
<rect x=1423 y=338 width=20 height=20 fill=#1a9918 />
<rect x=1443 y=338 width=20 height=20 fill=#2f9914 />
<rect x=1463 y=338 width=20 height=20 fill=#46990f />
<rect x=1483 y=338 width=20 height=20 fill=#5e990a />
<rect x=1503 y=338 width=20 height=20 fill=#789904 />
<rect x=1523 y=338 width=20 height=20 fill=#949900 />
<rect x=1543 y=338 width=20 height=20 fill=#998200 />
<rect x=1563 y=338 width=20 height=20 fill=#996d00 />
<rect x=1583 y=338 width=20 height=20 fill=#995d00 />
<rect x=1603 y=338 width=20 height=20 fill=#995000 />
<rect x=1623 y=338 width=20 height=20 fill=#994600 />
<rect x=1643 y=338 width=20 height=20 fill=#993d00 />
<rect x=1143 y=358 width=20 height=20 fill=#00994c />
<rect x=1163 y=358 width=20 height=20 fill=#00994a />
<rect x=1183 y=358 width=20 height=20 fill=#009948 />
<rect x=1203 y=358 width=20 height=20 fill=#009946 />
<rect x=1223 y=358 width=20 height=20 fill=#009944 />
<rect x=1243 y=358 width=20 height=20 fill=#009941 />
<rect x=1263 y=358 width=20 height=20 fill=#00993f />
<rect x=1283 y=358 width=20 height=20 fill=#00993c />
<rect x=1303 y=358 width=20 height=20 fill=#00993a />
<rect x=1323 y=358 width=20 height=20 fill=#009937 />
<rect x=1343 y=358 width=20 height=20 fill=#009934 />
<rect x=1363 y=358 width=20 height=20 fill=#009930 />
<rect x=1383 y=358 width=20 height=20 fill=#00992d />
<rect x=1403 y=358 width=20 height=20 fill=#0f9929 />
<rect x=1423 y=358 width=20 height=20 fill=#259925 />
<rect x=1443 y=358 width=20 height=20 fill=#3c9920 />
<rect x=1463 y=358 width=20 height=20 fill=#56991b />
<rect x=1483 y=358 width=20 height=20 fill=#719916 />
<rect x=1503 y=358 width=20 height=20 fill=#8f9910 />
<rect x=1523 y=358 width=20 height=20 fill=#998409 />
<rect x=1543 y=358 width=20 height=20 fill=#996e02 />
<rect x=1563 y=358 width=20 height=20 fill=#995d00 />
<rect x=1583 y=358 width=20 height=20 fill=#994f00 />
<rect x=1603 y=358 width=20 height=20 fill=#994400 />
<rect x=1623 y=358 width=20 height=20 fill=#993a00 />
<rect x=1643 y=358 width=20 height=20 fill=#993200 />
<rect x=1663 y=358 width=20 height=20 fill=#992c00 />
<rect x=1683 y=358 width=20 height=20 fill=#992600 />
<rect x=1143 y=378 width=20 height=20 fill=#009958 />
<rect x=1163 y=378 width=20 height=20 fill=#009956 />
<rect x=1183 y=378 width=20 height=20 fill=#009954 />
<rect x=1203 y=378 width=20 height=20 fill=#009953 />
<rect x=1223 y=378 width=20 height=20 fill=#009951 />
<rect x=1243 y=378 width=20 height=20 fill=#00994e />
<rect x=1263 y=378 width=20 height=20 fill=#00994c />
<rect x=1283 y=378 width=20 height=20 fill=#00994a />
<rect x=1303 y=378 width=20 height=20 fill=#009947 />
<rect x=1323 y=378 width=20 height=20 fill=#009945 />
<rect x=1343 y=378 width=20 height=20 fill=#009942 />
<rect x=1363 y=378 width=20 height=20 fill=#00993e />
<rect x=1383 y=378 width=20 height=20 fill=#03993b />
<rect x=1403 y=378 width=20 height=20 fill=#199937 />
<rect x=1423 y=378 width=20 height=20 fill=#329933 />
<rect x=1443 y=378 width=20 height=20 fill=#4c992f />
<rect x=1463 y=378 width=20 height=20 fill=#69992a />
<rect x=1483 y=378 width=20 height=20 fill=#899925 />
<rect x=1503 y=378 width=20 height=20 fill=#99871c />
<rect x=1523 y=378 width=20 height=20 fill=#996f12 />
<rect x=1543 y=378 width=20 height=20 fill=#995c0b />
<rect x=1563 y=378 width=20 height=20 fill=#994d05 />
<rect x=1583 y=378 width=20 height=20 fill=#994201 />
<rect x=1603 y=378 width=20 height=20 fill=#993800 />
<rect x=1623 y=378 width=20 height=20 fill=#993000 />
<rect x=1643 y=378 width=20 height=20 fill=#992900 />
<rect x=1663 y=378 width=20 height=20 fill=#992300 />
<rect x=1683 y=378 width=20 height=20 fill=#991e00 />
<rect x=1703 y=378 width=20 height=20 fill=#991a00 />
<rect x=1143 y=398 width=20 height=20 fill=#009966 />
<rect x=1163 y=398 width=20 height=20 fill=#009964 />
<rect x=1183 y=398 width=20 height=20 fill=#009963 />
<rect x=1203 y=398 width=20 height=20 fill=#009961 />
<rect x=1223 y=398 width=20 height=20 fill=#00995f />
<rect x=1243 y=398 width=20 height=20 fill=#00995e />
<rect x=1263 y=398 width=20 height=20 fill=#00995c />
<rect x=1283 y=398 width=20 height=20 fill=#00995a />
<rect x=1303 y=398 width=20 height=20 fill=#009957 />
<rect x=1323 y=398 width=20 height=20 fill=#009955 />
<rect x=1343 y=398 width=20 height=20 fill=#009952 />
<rect x=1363 y=398 width=20 height=20 fill=#009950 />
<rect x=1383 y=398 width=20 height=20 fill=#0c994d />
<rect x=1403 y=398 width=20 height=20 fill=#269949 />
<rect x=1423 y=398 width=20 height=20 fill=#429946 />
<rect x=1443 y=398 width=20 height=20 fill=#609942 />
<rect x=1463 y=398 width=20 height=20 fill=#82993d />
<rect x=1483 y=398 width=20 height=20 fill=#998b34 />
<rect x=1503 y=398 width=20 height=20 fill=#996f25 />
<rect x=1523 y=398 width=20 height=20 fill=#995b1b />
<rect x=1543 y=398 width=20 height=20 fill=#994b13 />
<rect x=1563 y=398 width=20 height=20 fill=#993f0d />
<rect x=1583 y=398 width=20 height=20 fill=#993507 />
<rect x=1603 y=398 width=20 height=20 fill=#992d03 />
<rect x=1623 y=398 width=20 height=20 fill=#992600 />
<rect x=1643 y=398 width=20 height=20 fill=#992000 />
<rect x=1663 y=398 width=20 height=20 fill=#991b00 />
<rect x=1683 y=398 width=20 height=20 fill=#991700 />
<rect x=1703 y=398 width=20 height=20 fill=#991300 />
<rect x=1723 y=398 width=20 height=20 fill=#990f00 />
<rect x=1143 y=418 width=20 height=20 fill=#009975 />
<rect x=1163 y=418 width=20 height=20 fill=#009974 />
<rect x=1183 y=418 width=20 height=20 fill=#009973 />
<rect x=1203 y=418 width=20 height=20 fill=#009972 />
<rect x=1223 y=418 width=20 height=20 fill=#009971 />
<rect x=1243 y=418 width=20 height=20 fill=#00996f />
<rect x=1263 y=418 width=20 height=20 fill=#00996e />
<rect x=1283 y=418 width=20 height=20 fill=#00996c />
<rect x=1303 y=418 width=20 height=20 fill=#00996b />
<rect x=1323 y=418 width=20 height=20 fill=#009969 />
<rect x=1343 y=418 width=20 height=20 fill=#009967 />
<rect x=1363 y=418 width=20 height=20 fill=#009965 />
<rect x=1383 y=418 width=20 height=20 fill=#189962 />
<rect x=1403 y=418 width=20 height=20 fill=#369960 />
<rect x=1423 y=418 width=20 height=20 fill=#56995d />
<rect x=1443 y=418 width=20 height=20 fill=#7a995a />
<rect x=1463 y=418 width=20 height=20 fill=#998f51 />
<rect x=1483 y=418 width=20 height=20 fill=#99703c />
<rect x=1503 y=418 width=20 height=20 fill=#995a2e />
<rect x=1523 y=418 width=20 height=20 fill=#994923 />
<rect x=1543 y=418 width=20 height=20 fill=#993c1a />
<rect x=1563 y=418 width=20 height=20 fill=#993213 />
<rect x=1583 y=418 width=20 height=20 fill=#992a0e />
<rect x=1603 y=418 width=20 height=20 fill=#992309 />
<rect x=1623 y=418 width=20 height=20 fill=#991d05 />
<rect x=1643 y=418 width=20 height=20 fill=#991802 />
<rect x=1663 y=418 width=20 height=20 fill=#991300 />
<rect x=1683 y=418 width=20 height=20 fill=#991000 />
<rect x=1703 y=418 width=20 height=20 fill=#990c00 />
<rect x=1723 y=418 width=20 height=20 fill=#990900 />
<rect x=1743 y=418 width=20 height=20 fill=#990600 />
<rect x=1763 y=418 width=20 height=20 fill=#990400 />
<rect x=1163 y=438 width=20 height=20 fill=#009987 />
<rect x=1183 y=438 width=20 height=20 fill=#009987 />
<rect x=1203 y=438 width=20 height=20 fill=#009986 />
<rect x=1223 y=438 width=20 height=20 fill=#009986 />
<rect x=1243 y=438 width=20 height=20 fill=#009985 />
<rect x=1263 y=438 width=20 height=20 fill=#009984 />
<rect x=1283 y=438 width=20 height=20 fill=#009983 />
<rect x=1303 y=438 width=20 height=20 fill=#009982 />
<rect x=1323 y=438 width=20 height=20 fill=#009982 />
<rect x=1343 y=438 width=20 height=20 fill=#009980 />
<rect x=1363 y=438 width=20 height=20 fill=#09997f />
<rect x=1383 y=438 width=20 height=20 fill=#27997e />
<rect x=1403 y=438 width=20 height=20 fill=#4a997d />
<rect x=1423 y=438 width=20 height=20 fill=#70997b />
<rect x=1443 y=438 width=20 height=20 fill=#999577 />
<rect x=1463 y=438 width=20 height=20 fill=#997159 />
<rect x=1483 y=438 width=20 height=20 fill=#995944 />
<rect x=1503 y=438 width=20 height=20 fill=#994735 />
<rect x=1523 y=438 width=20 height=20 fill=#99392a />
<rect x=1543 y=438 width=20 height=20 fill=#992f21 />
<rect x=1563 y=438 width=20 height=20 fill=#99261a />
<rect x=1583 y=438 width=20 height=20 fill=#991f14 />
<rect x=1603 y=438 width=20 height=20 fill=#99190f />
<rect x=1623 y=438 width=20 height=20 fill=#99140a />
<rect x=1643 y=438 width=20 height=20 fill=#991007 />
<rect x=1663 y=438 width=20 height=20 fill=#990c04 />
<rect x=1683 y=438 width=20 height=20 fill=#990901 />
<rect x=1703 y=438 width=20 height=20 fill=#990600 />
<rect x=1723 y=438 width=20 height=20 fill=#990300 />
<rect x=1743 y=438 width=20 height=20 fill=#990100 />
<rect x=1763 y=438 width=20 height=20 fill=#990000 />
<rect x=1783 y=438 width=20 height=20 fill=#990000 />
<rect x=1163 y=458 width=20 height=20 fill=#009399 />
<rect x=1183 y=458 width=20 height=20 fill=#009399 />
<rect x=1203 y=458 width=20 height=20 fill=#009399 />
<rect x=1223 y=458 width=20 height=20 fill=#009399 />
<rect x=1243 y=458 width=20 height=20 fill=#009299 />
<rect x=1263 y=458 width=20 height=20 fill=#009299 />
<rect x=1283 y=458 width=20 height=20 fill=#009299 />
<rect x=1303 y=458 width=20 height=20 fill=#009199 />
<rect x=1323 y=458 width=20 height=20 fill=#009199 />
<rect x=1343 y=458 width=20 height=20 fill=#009099 />
<rect x=1363 y=458 width=20 height=20 fill=#159099 />
<rect x=1383 y=458 width=20 height=20 fill=#388f99 />
<rect x=1403 y=458 width=20 height=20 fill=#5e8f99 />
<rect x=1423 y=458 width=20 height=20 fill=#8a8e99 />
<rect x=1443 y=458 width=20 height=20 fill=#99737c />
<rect x=1463 y=458 width=20 height=20 fill=#99575f />
<rect x=1483 y=458 width=20 height=20 fill=#99444b />
<rect x=1503 y=458 width=20 height=20 fill=#99363c />
<rect x=1523 y=458 width=20 height=20 fill=#992b30 />
<rect x=1543 y=458 width=20 height=20 fill=#992227 />
<rect x=1563 y=458 width=20 height=20 fill=#991b1f />
<rect x=1583 y=458 width=20 height=20 fill=#991519 />
<rect x=1603 y=458 width=20 height=20 fill=#991014 />
<rect x=1623 y=458 width=20 height=20 fill=#990c0f />
<rect x=1643 y=458 width=20 height=20 fill=#99080c />
<rect x=1663 y=458 width=20 height=20 fill=#990508 />
<rect x=1683 y=458 width=20 height=20 fill=#990205 />
<rect x=1703 y=458 width=20 height=20 fill=#990003 />
<rect x=1723 y=458 width=20 height=20 fill=#990000 />
<rect x=1743 y=458 width=20 height=20 fill=#990000 />
<rect x=1763 y=458 width=20 height=20 fill=#990000 />
<rect x=1783 y=458 width=20 height=20 fill=#990000 />
<rect x=1803 y=458 width=20 height=20 fill=#990000 />
<rect x=1823 y=458 width=20 height=20 fill=#990000 />
<rect x=1163 y=478 width=20 height=20 fill=#007e99 />
<rect x=1183 y=478 width=20 height=20 fill=#007d99 />
<rect x=1203 y=478 width=20 height=20 fill=#007c99 />
<rect x=1223 y=478 width=20 height=20 fill=#007b99 />
<rect x=1243 y=478 width=20 height=20 fill=#007999 />
<rect x=1263 y=478 width=20 height=20 fill=#007899 />
<rect x=1283 y=478 width=20 height=20 fill=#007799 />
<rect x=1303 y=478 width=20 height=20 fill=#007599 />
<rect x=1323 y=478 width=20 height=20 fill=#007499 />
<rect x=1343 y=478 width=20 height=20 fill=#027299 />
<rect x=1363 y=478 width=20 height=20 fill=#1f7099 />
<rect x=1383 y=478 width=20 height=20 fill=#3e6e99 />
<rect x=1403 y=478 width=20 height=20 fill=#616b99 />
<rect x=1423 y=478 width=20 height=20 fill=#886899 />
<rect x=1443 y=478 width=20 height=20 fill=#995681 />
<rect x=1463 y=478 width=20 height=20 fill=#994165 />
<rect x=1483 y=478 width=20 height=20 fill=#993251 />
<rect x=1503 y=478 width=20 height=20 fill=#992642 />
<rect x=1523 y=478 width=20 height=20 fill=#991d36 />
<rect x=1543 y=478 width=20 height=20 fill=#99162c />
<rect x=1563 y=478 width=20 height=20 fill=#991125 />
<rect x=1583 y=478 width=20 height=20 fill=#990c1e />
<rect x=1603 y=478 width=20 height=20 fill=#990819 />
<rect x=1623 y=478 width=20 height=20 fill=#990414 />
<rect x=1643 y=478 width=20 height=20 fill=#990110 />
<rect x=1663 y=478 width=20 height=20 fill=#99000c />
<rect x=1683 y=478 width=20 height=20 fill=#990009 />
<rect x=1703 y=478 width=20 height=20 fill=#990006 />
<rect x=1723 y=478 width=20 height=20 fill=#990004 />
<rect x=1743 y=478 width=20 height=20 fill=#990002 />
<rect x=1763 y=478 width=20 height=20 fill=#990000 />
<rect x=1783 y=478 width=20 height=20 fill=#990000 />
<rect x=1803 y=478 width=20 height=20 fill=#990000 />
<rect x=1823 y=478 width=20 height=20 fill=#990000 />
<rect x=1163 y=498 width=20 height=20 fill=#006b99 />
<rect x=1183 y=498 width=20 height=20 fill=#006999 />
<rect x=1203 y=498 width=20 height=20 fill=#006799 />
<rect x=1223 y=498 width=20 height=20 fill=#006699 />
<rect x=1243 y=498 width=20 height=20 fill=#006499 />
<rect x=1263 y=498 width=20 height=20 fill=#006299 />
<rect x=1283 y=498 width=20 height=20 fill=#006099 />
<rect x=1303 y=498 width=20 height=20 fill=#005d99 />
<rect x=1323 y=498 width=20 height=20 fill=#005b99 />
<rect x=1343 y=498 width=20 height=20 fill=#0b5899 />
<rect x=1363 y=498 width=20 height=20 fill=#265599 />
<rect x=1383 y=498 width=20 height=20 fill=#435299 />
<rect x=1403 y=498 width=20 height=20 fill=#644e99 />
<rect x=1423 y=498 width=20 height=20 fill=#874a99 />
<rect x=1443 y=498 width=20 height=20 fill=#993c85 />
<rect x=1463 y=498 width=20 height=20 fill=#992d6a />
<rect x=1483 y=498 width=20 height=20 fill=#992156 />
<rect x=1503 y=498 width=20 height=20 fill=#991847 />
<rect x=1523 y=498 width=20 height=20 fill=#99113b />
<rect x=1543 y=498 width=20 height=20 fill=#990c32 />
<rect x=1563 y=498 width=20 height=20 fill=#99072a />
<rect x=1583 y=498 width=20 height=20 fill=#990323 />
<rect x=1603 y=498 width=20 height=20 fill=#99001d />
<rect x=1623 y=498 width=20 height=20 fill=#990018 />
<rect x=1643 y=498 width=20 height=20 fill=#990014 />
<rect x=1663 y=498 width=20 height=20 fill=#990010 />
<rect x=1683 y=498 width=20 height=20 fill=#99000d />
<rect x=1703 y=498 width=20 height=20 fill=#99000a />
<rect x=1723 y=498 width=20 height=20 fill=#990008 />
<rect x=1743 y=498 width=20 height=20 fill=#990005 />
<rect x=1763 y=498 width=20 height=20 fill=#990003 />
<rect x=1783 y=498 width=20 height=20 fill=#990001 />
<rect x=1803 y=498 width=20 height=20 fill=#990000 />
<rect x=1823 y=498 width=20 height=20 fill=#990000 />
<rect x=1183 y=518 width=20 height=20 fill=#005799 />
<rect x=1203 y=518 width=20 height=20 fill=#005599 />
<rect x=1223 y=518 width=20 height=20 fill=#005399 />
<rect x=1243 y=518 width=20 height=20 fill=#005199 />
<rect x=1263 y=518 width=20 height=20 fill=#004e99 />
<rect x=1283 y=518 width=20 height=20 fill=#004b99 />
<rect x=1303 y=518 width=20 height=20 fill=#004899 />
<rect x=1323 y=518 width=20 height=20 fill=#004599 />
<rect x=1343 y=518 width=20 height=20 fill=#144299 />
<rect x=1363 y=518 width=20 height=20 fill=#2d3e99 />
<rect x=1383 y=518 width=20 height=20 fill=#483a99 />
<rect x=1403 y=518 width=20 height=20 fill=#663599 />
<rect x=1423 y=518 width=20 height=20 fill=#873199 />
<rect x=1443 y=518 width=20 height=20 fill=#992788 />
<rect x=1463 y=518 width=20 height=20 fill=#991b6e />
<rect x=1483 y=518 width=20 height=20 fill=#99125b />
<rect x=1503 y=518 width=20 height=20 fill=#990b4c />
<rect x=1523 y=518 width=20 height=20 fill=#990640 />
<rect x=1543 y=518 width=20 height=20 fill=#990236 />
<rect x=1563 y=518 width=20 height=20 fill=#99002e />
<rect x=1583 y=518 width=20 height=20 fill=#990028 />
<rect x=1603 y=518 width=20 height=20 fill=#990022 />
<rect x=1623 y=518 width=20 height=20 fill=#99001d />
<rect x=1643 y=518 width=20 height=20 fill=#990018 />
<rect x=1663 y=518 width=20 height=20 fill=#990014 />
<rect x=1683 y=518 width=20 height=20 fill=#990011 />
<rect x=1703 y=518 width=20 height=20 fill=#99000e />
<rect x=1723 y=518 width=20 height=20 fill=#99000b />
<rect x=1743 y=518 width=20 height=20 fill=#990008 />
<rect x=1763 y=518 width=20 height=20 fill=#990006 />
<rect x=1783 y=518 width=20 height=20 fill=#990004 />
<rect x=1803 y=518 width=20 height=20 fill=#990002 />
<rect x=1823 y=518 width=20 height=20 fill=#990000 />
<rect x=1183 y=538 width=20 height=20 fill=#004899 />
<rect x=1203 y=538 width=20 height=20 fill=#004599 />
<rect x=1223 y=538 width=20 height=20 fill=#004299 />
<rect x=1243 y=538 width=20 height=20 fill=#004099 />
<rect x=1263 y=538 width=20 height=20 fill=#003d99 />
<rect x=1283 y=538 width=20 height=20 fill=#003999 />
<rect x=1303 y=538 width=20 height=20 fill=#003699 />
<rect x=1323 y=538 width=20 height=20 fill=#053299 />
<rect x=1343 y=538 width=20 height=20 fill=#1b2e99 />
<rect x=1363 y=538 width=20 height=20 fill=#322a99 />
<rect x=1383 y=538 width=20 height=20 fill=#4c2699 />
<rect x=1403 y=538 width=20 height=20 fill=#682199 />
<rect x=1423 y=538 width=20 height=20 fill=#861b99 />
<rect x=1443 y=538 width=20 height=20 fill=#99138b />
<rect x=1463 y=538 width=20 height=20 fill=#990b72 />
<rect x=1483 y=538 width=20 height=20 fill=#99055f />
<rect x=1503 y=538 width=20 height=20 fill=#990051 />
<rect x=1523 y=538 width=20 height=20 fill=#990045 />
<rect x=1543 y=538 width=20 height=20 fill=#99003b />
<rect x=1563 y=538 width=20 height=20 fill=#990033 />
<rect x=1583 y=538 width=20 height=20 fill=#99002c />
<rect x=1603 y=538 width=20 height=20 fill=#990026 />
<rect x=1623 y=538 width=20 height=20 fill=#990021 />
<rect x=1643 y=538 width=20 height=20 fill=#99001c />
<rect x=1663 y=538 width=20 height=20 fill=#990018 />
<rect x=1683 y=538 width=20 height=20 fill=#990014 />
<rect x=1703 y=538 width=20 height=20 fill=#990011 />
<rect x=1723 y=538 width=20 height=20 fill=#99000e />
<rect x=1743 y=538 width=20 height=20 fill=#99000c />
<rect x=1763 y=538 width=20 height=20 fill=#990009 />
<rect x=1783 y=538 width=20 height=20 fill=#990007 />
<rect x=1183 y=558 width=20 height=20 fill=#003999 />
<rect x=1203 y=558 width=20 height=20 fill=#003699 />
<rect x=1223 y=558 width=20 height=20 fill=#003499 />
<rect x=1243 y=558 width=20 height=20 fill=#003099 />
<rect x=1263 y=558 width=20 height=20 fill=#002d99 />
<rect x=1283 y=558 width=20 height=20 fill=#002a99 />
<rect x=1303 y=558 width=20 height=20 fill=#002699 />
<rect x=1323 y=558 width=20 height=20 fill=#0c2299 />
<rect x=1343 y=558 width=20 height=20 fill=#211e99 />
<rect x=1363 y=558 width=20 height=20 fill=#371999 />
<rect x=1383 y=558 width=20 height=20 fill=#4f1499 />
<rect x=1403 y=558 width=20 height=20 fill=#690f99 />
<rect x=1423 y=558 width=20 height=20 fill=#850999 />
<rect x=1443 y=558 width=20 height=20 fill=#99038e />
<rect x=1463 y=558 width=20 height=20 fill=#990076 />
<rect x=1483 y=558 width=20 height=20 fill=#990063 />
<rect x=1503 y=558 width=20 height=20 fill=#990055 />
<rect x=1523 y=558 width=20 height=20 fill=#990049 />
<rect x=1543 y=558 width=20 height=20 fill=#99003f />
<rect x=1563 y=558 width=20 height=20 fill=#990037 />
<rect x=1583 y=558 width=20 height=20 fill=#990030 />
<rect x=1603 y=558 width=20 height=20 fill=#99002a />
<rect x=1623 y=558 width=20 height=20 fill=#990024 />
<rect x=1643 y=558 width=20 height=20 fill=#990020 />
<rect x=1663 y=558 width=20 height=20 fill=#99001c />
<rect x=1683 y=558 width=20 height=20 fill=#990018 />
<rect x=1703 y=558 width=20 height=20 fill=#990015 />
<rect x=1723 y=558 width=20 height=20 fill=#990012 />
<rect x=1203 y=578 width=20 height=20 fill=#002999 />
<rect x=1223 y=578 width=20 height=20 fill=#002699 />
<rect x=1243 y=578 width=20 height=20 fill=#002399 />
<rect x=1263 y=578 width=20 height=20 fill=#001f99 />
<rect x=1283 y=578 width=20 height=20 fill=#001c99 />
<rect x=1303 y=578 width=20 height=20 fill=#001899 />
<rect x=1323 y=578 width=20 height=20 fill=#121399 />
<rect x=1343 y=578 width=20 height=20 fill=#260f99 />
<rect x=1363 y=578 width=20 height=20 fill=#3b0a99 />
<rect x=1383 y=578 width=20 height=20 fill=#520599 />
<rect x=1403 y=578 width=20 height=20 fill=#6a0099 />
<rect x=1423 y=578 width=20 height=20 fill=#850099 />
<rect x=1443 y=578 width=20 height=20 fill=#990090 />
<rect x=1463 y=578 width=20 height=20 fill=#990079 />
<rect x=1483 y=578 width=20 height=20 fill=#990067 />
<rect x=1503 y=578 width=20 height=20 fill=#990059 />
<rect x=1523 y=578 width=20 height=20 fill=#99004d />
<rect x=1543 y=578 width=20 height=20 fill=#990043 />
<rect x=1563 y=578 width=20 height=20 fill=#99003b />
<rect x=1583 y=578 width=20 height=20 fill=#990034 />
<rect x=1603 y=578 width=20 height=20 fill=#99002d />
<rect x=1623 y=578 width=20 height=20 fill=#990028 />
<rect x=1643 y=578 width=20 height=20 fill=#990023 />
<rect x=1663 y=578 width=20 height=20 fill=#99001f />
<rect x=1203 y=598 width=20 height=20 fill=#001d99 />
<rect x=1223 y=598 width=20 height=20 fill=#001a99 />
<rect x=1243 y=598 width=20 height=20 fill=#001699 />
<rect x=1263 y=598 width=20 height=20 fill=#001399 />
<rect x=1283 y=598 width=20 height=20 fill=#000f99 />
<rect x=1303 y=598 width=20 height=20 fill=#060b99 />
<rect x=1323 y=598 width=20 height=20 fill=#180699 />
<rect x=1343 y=598 width=20 height=20 fill=#2b0299 />
<rect x=1363 y=598 width=20 height=20 fill=#3f0099 />
<rect x=1383 y=598 width=20 height=20 fill=#550099 />
<rect x=1403 y=598 width=20 height=20 fill=#6c0099 />
<rect x=1423 y=598 width=20 height=20 fill=#840099 />
<rect x=1443 y=598 width=20 height=20 fill=#990092 />
<rect x=1463 y=598 width=20 height=20 fill=#99007c />
<rect x=1483 y=598 width=20 height=20 fill=#99006b />
<rect x=1503 y=598 width=20 height=20 fill=#99005c />
<rect x=1523 y=598 width=20 height=20 fill=#990051 />
<rect x=1543 y=598 width=20 height=20 fill=#990047 />
<rect x=1563 y=598 width=20 height=20 fill=#99003e />
<rect x=1583 y=598 width=20 height=20 fill=#990037 />
<rect x=1603 y=598 width=20 height=20 fill=#990031 />
<rect x=1223 y=618 width=20 height=20 fill=#000f99 />
<rect x=1243 y=618 width=20 height=20 fill=#000b99 />
<rect x=1263 y=618 width=20 height=20 fill=#000799 />
<rect x=1283 y=618 width=20 height=20 fill=#000399 />
<rect x=1303 y=618 width=20 height=20 fill=#0c0099 />
<rect x=1323 y=618 width=20 height=20 fill=#1d0099 />
<rect x=1343 y=618 width=20 height=20 fill=#2f0099 />
<rect x=1363 y=618 width=20 height=20 fill=#430099 />
<rect x=1383 y=618 width=20 height=20 fill=#570099 />
<rect x=1403 y=618 width=20 height=20 fill=#6d0099 />
<rect x=1423 y=618 width=20 height=20 fill=#840099 />
<rect x=1443 y=618 width=20 height=20 fill=#990094 />
<rect x=1463 y=618 width=20 height=20 fill=#99007f />
<rect x=1483 y=618 width=20 height=20 fill=#99006e />
<rect x=1503 y=618 width=20 height=20 fill=#990060 />
<rect x=1523 y=618 width=20 height=20 fill=#990054 />
<rect x=1543 y=618 width=20 height=20 fill=#99004a />
<rect x=1223 y=638 width=20 height=20 fill=#000599 />
<rect x=1243 y=638 width=20 height=20 fill=#000199 />
<rect x=1263 y=638 width=20 height=20 fill=#000099 />
<rect x=1283 y=638 width=20 height=20 fill=#020099 />
<rect x=1303 y=638 width=20 height=20 fill=#120099 />
<rect x=1323 y=638 width=20 height=20 fill=#220099 />
<rect x=1343 y=638 width=20 height=20 fill=#330099 />
<rect x=1363 y=638 width=20 height=20 fill=#460099 />
<rect x=1383 y=638 width=20 height=20 fill=#590099 />
<rect x=1403 y=638 width=20 height=20 fill=#6e0099 />
<rect x=1423 y=638 width=20 height=20 fill=#840099 />
<rect x=1443 y=638 width=20 height=20 fill=#990096 />
<rect x=1463 y=638 width=20 height=20 fill=#990081 />
<rect x=1483 y=638 width=20 height=20 fill=#990071 />
<rect x=1243 y=658 width=20 height=20 fill=#000099 />
<rect x=1263 y=658 width=20 height=20 fill=#000099 />
<rect x=1283 y=658 width=20 height=20 fill=#080099 />
<rect x=1303 y=658 width=20 height=20 fill=#170099 />
<rect x=1323 y=658 width=20 height=20 fill=#260099 />
<rect x=1343 y=658 width=20 height=20 fill=#370099 />
<rect x=1363 y=658 width=20 height=20 fill=#480099 />
<rect x=1383 y=658 width=20 height=20 fill=#5b0099 />
<rect x=1403 y=658 width=20 height=20 fill=#6e0099 />
<rect x=1423 y=658 width=20 height=20 fill=#830099 />
<rect x=1263 y=678 width=20 height=20 fill=#000099 />
<rect x=1283 y=678 width=20 height=20 fill=#090099 />
<rect x=1303 y=678 width=20 height=20 fill=#180099 />
<rect x=1323 y=678 width=20 height=20 fill=#270099 />
<rect x=1343 y=678 width=20 height=20 fill=#380099 />
<rect x=1363 y=678 width=20 height=20 fill=#490099 />
</g></g>
<g clip-path="url(#tr)"><g filter="url(#bl)">
<rect x=1383 y=278 width=20 height=20 fill=#00ff09 />
<rect x=1403 y=278 width=20 height=20 fill=#00ff03 />
<rect x=1423 y=278 width=20 height=20 fill=#05ff00 />
<rect x=1443 y=278 width=20 height=20 fill=#20ff00 />
<rect x=1463 y=278 width=20 height=20 fill=#3cff00 />
<rect x=1483 y=278 width=20 height=20 fill=#59ff00 />
<rect x=1383 y=298 width=20 height=20 fill=#00ff16 />
<rect x=1403 y=298 width=20 height=20 fill=#00ff10 />
<rect x=1423 y=298 width=20 height=20 fill=#10ff09 />
<rect x=1443 y=298 width=20 height=20 fill=#2dff02 />
<rect x=1463 y=298 width=20 height=20 fill=#4cff00 />
<rect x=1483 y=298 width=20 height=20 fill=#6cff00 />
<rect x=1503 y=298 width=20 height=20 fill=#8fff00 />
<rect x=1523 y=298 width=20 height=20 fill=#b4ff00 />
<rect x=1363 y=318 width=20 height=20 fill=#00ff2b />
<rect x=1383 y=318 width=20 height=20 fill=#00ff25 />
<rect x=1403 y=318 width=20 height=20 fill=#00ff1f />
<rect x=1423 y=318 width=20 height=20 fill=#1dff18 />
<rect x=1443 y=318 width=20 height=20 fill=#3dff10 />
<rect x=1463 y=318 width=20 height=20 fill=#5eff08 />
<rect x=1483 y=318 width=20 height=20 fill=#82ff00 />
<rect x=1503 y=318 width=20 height=20 fill=#a9ff00 />
<rect x=1523 y=318 width=20 height=20 fill=#d3ff00 />
<rect x=1543 y=318 width=20 height=20 fill=#fffe00 />
<rect x=1563 y=318 width=20 height=20 fill=#ffd500 />
<rect x=1363 y=338 width=20 height=20 fill=#00ff3d />
<rect x=1383 y=338 width=20 height=20 fill=#00ff36 />
<rect x=1403 y=338 width=20 height=20 fill=#0bff30 />
<rect x=1423 y=338 width=20 height=20 fill=#2cff29 />
<rect x=1443 y=338 width=20 height=20 fill=#4fff21 />
<rect x=1463 y=338 width=20 height=20 fill=#75ff19 />
<rect x=1483 y=338 width=20 height=20 fill=#9dff11 />
<rect x=1503 y=338 width=20 height=20 fill=#c8ff07 />
<rect x=1523 y=338 width=20 height=20 fill=#f8ff00 />
<rect x=1543 y=338 width=20 height=20 fill=#ffd900 />
<rect x=1563 y=338 width=20 height=20 fill=#ffb700 />
<rect x=1583 y=338 width=20 height=20 fill=#ff9c00 />
<rect x=1363 y=358 width=20 height=20 fill=#00ff51 />
<rect x=1383 y=358 width=20 height=20 fill=#00ff4b />
<rect x=1403 y=358 width=20 height=20 fill=#1aff44 />
<rect x=1423 y=358 width=20 height=20 fill=#3eff3d />
<rect x=1443 y=358 width=20 height=20 fill=#65ff36 />
<rect x=1463 y=358 width=20 height=20 fill=#8fff2e />
<rect x=1483 y=358 width=20 height=20 fill=#bdff25 />
<rect x=1503 y=358 width=20 height=20 fill=#efff1c />
<rect x=1523 y=358 width=20 height=20 fill=#ffdd0f />
<rect x=1543 y=358 width=20 height=20 fill=#ffb804 />
<rect x=1563 y=358 width=20 height=20 fill=#ff9b00 />
<rect x=1583 y=358 width=20 height=20 fill=#ff8400 />
<rect x=1603 y=358 width=20 height=20 fill=#ff7100 />
<rect x=1623 y=358 width=20 height=20 fill=#ff6200 />
<rect x=1343 y=378 width=20 height=20 fill=#00ff6e />
<rect x=1363 y=378 width=20 height=20 fill=#00ff68 />
<rect x=1383 y=378 width=20 height=20 fill=#05ff63 />
<rect x=1403 y=378 width=20 height=20 fill=#2bff5d />
<rect x=1423 y=378 width=20 height=20 fill=#54ff56 />
<rect x=1443 y=378 width=20 height=20 fill=#80ff4f />
<rect x=1463 y=378 width=20 height=20 fill=#b0ff47 />
<rect x=1483 y=378 width=20 height=20 fill=#e5ff3f />
<rect x=1503 y=378 width=20 height=20 fill=#ffe22f />
<rect x=1523 y=378 width=20 height=20 fill=#ffb91f />
<rect x=1543 y=378 width=20 height=20 fill=#ff9913 />
<rect x=1563 y=378 width=20 height=20 fill=#ff8109 />
<rect x=1583 y=378 width=20 height=20 fill=#ff6e02 />
<rect x=1603 y=378 width=20 height=20 fill=#ff5e00 />
<rect x=1623 y=378 width=20 height=20 fill=#ff5000 />
<rect x=1643 y=378 width=20 height=20 fill=#ff4500 />
<rect x=1663 y=378 width=20 height=20 fill=#ff3b00 />
<rect x=1343 y=398 width=20 height=20 fill=#00ff8a />
<rect x=1363 y=398 width=20 height=20 fill=#00ff85 />
<rect x=1383 y=398 width=20 height=20 fill=#15ff80 />
<rect x=1403 y=398 width=20 height=20 fill=#40ff7b />
<rect x=1423 y=398 width=20 height=20 fill=#6eff75 />
<rect x=1443 y=398 width=20 height=20 fill=#a1ff6e />
<rect x=1463 y=398 width=20 height=20 fill=#d9ff67 />
<rect x=1483 y=398 width=20 height=20 fill=#ffe856 />
<rect x=1503 y=398 width=20 height=20 fill=#ffba3f />
<rect x=1523 y=398 width=20 height=20 fill=#ff982d />
<rect x=1543 y=398 width=20 height=20 fill=#ff7e20 />
<rect x=1563 y=398 width=20 height=20 fill=#ff6a15 />
<rect x=1583 y=398 width=20 height=20 fill=#ff590d />
<rect x=1603 y=398 width=20 height=20 fill=#ff4b06 />
<rect x=1623 y=398 width=20 height=20 fill=#ff4000 />
<rect x=1643 y=398 width=20 height=20 fill=#ff3600 />
<rect x=1663 y=398 width=20 height=20 fill=#ff2d00 />
<rect x=1683 y=398 width=20 height=20 fill=#ff2600 />
<rect x=1703 y=398 width=20 height=20 fill=#ff2000 />
<rect x=1323 y=418 width=20 height=20 fill=#00ffaf />
<rect x=1343 y=418 width=20 height=20 fill=#00ffac />
<rect x=1363 y=418 width=20 height=20 fill=#00ffa8 />
<rect x=1383 y=418 width=20 height=20 fill=#29ffa4 />
<rect x=1403 y=418 width=20 height=20 fill=#5affa0 />
<rect x=1423 y=418 width=20 height=20 fill=#90ff9b />
<rect x=1443 y=418 width=20 height=20 fill=#ccff96 />
<rect x=1463 y=418 width=20 height=20 fill=#ffef87 />
<rect x=1483 y=418 width=20 height=20 fill=#ffbb65 />
<rect x=1503 y=418 width=20 height=20 fill=#ff964c />
<rect x=1523 y=418 width=20 height=20 fill=#ff7b3a />
<rect x=1543 y=418 width=20 height=20 fill=#ff652c />
<rect x=1563 y=418 width=20 height=20 fill=#ff5421 />
<rect x=1583 y=418 width=20 height=20 fill=#ff4617 />
<rect x=1603 y=418 width=20 height=20 fill=#ff3a10 />
<rect x=1623 y=418 width=20 height=20 fill=#ff3009 />
<rect x=1643 y=418 width=20 height=20 fill=#ff2803 />
<rect x=1663 y=418 width=20 height=20 fill=#ff2100 />
<rect x=1683 y=418 width=20 height=20 fill=#ff1a00 />
<rect x=1703 y=418 width=20 height=20 fill=#ff1500 />
<rect x=1723 y=418 width=20 height=20 fill=#ff1000 />
<rect x=1323 y=438 width=20 height=20 fill=#00ffd8 />
<rect x=1343 y=438 width=20 height=20 fill=#00ffd6 />
<rect x=1363 y=438 width=20 height=20 fill=#0fffd5 />
<rect x=1383 y=438 width=20 height=20 fill=#42ffd2 />
<rect x=1403 y=438 width=20 height=20 fill=#7bffd0 />
<rect x=1423 y=438 width=20 height=20 fill=#bcffcd />
<rect x=1443 y=438 width=20 height=20 fill=#fff9c6 />
<rect x=1463 y=438 width=20 height=20 fill=#ffbd94 />
<rect x=1483 y=438 width=20 height=20 fill=#ff9472 />
<rect x=1503 y=438 width=20 height=20 fill=#ff7759 />
<rect x=1523 y=438 width=20 height=20 fill=#ff6046 />
<rect x=1543 y=438 width=20 height=20 fill=#ff4e37 />
<rect x=1563 y=438 width=20 height=20 fill=#ff402b />
<rect x=1583 y=438 width=20 height=20 fill=#ff3421 />
<rect x=1603 y=438 width=20 height=20 fill=#ff2a19 />
<rect x=1623 y=438 width=20 height=20 fill=#ff2212 />
<rect x=1643 y=438 width=20 height=20 fill=#ff1b0c />
<rect x=1663 y=438 width=20 height=20 fill=#ff1406 />
<rect x=1683 y=438 width=20 height=20 fill=#ff0f02 />
<rect x=1703 y=438 width=20 height=20 fill=#ff0a00 />
<rect x=1723 y=438 width=20 height=20 fill=#ff0600 />
<rect x=1323 y=458 width=20 height=20 fill=#00f2ff />
<rect x=1343 y=458 width=20 height=20 fill=#00f1ff />
<rect x=1363 y=458 width=20 height=20 fill=#24f0ff />
<rect x=1383 y=458 width=20 height=20 fill=#5defff />
<rect x=1403 y=458 width=20 height=20 fill=#9deeff />
<rect x=1423 y=458 width=20 height=20 fill=#e6edff />
<rect x=1443 y=458 width=20 height=20 fill=#ffc0cf />
<rect x=1463 y=458 width=20 height=20 fill=#ff929f />
<rect x=1483 y=458 width=20 height=20 fill=#ff727d />
<rect x=1503 y=458 width=20 height=20 fill=#ff5a64 />
<rect x=1523 y=458 width=20 height=20 fill=#ff4850 />
<rect x=1543 y=458 width=20 height=20 fill=#ff3941 />
<rect x=1563 y=458 width=20 height=20 fill=#ff2d35 />
<rect x=1583 y=458 width=20 height=20 fill=#ff242a />
<rect x=1603 y=458 width=20 height=20 fill=#ff1b21 />
<rect x=1623 y=458 width=20 height=20 fill=#ff141a />
<rect x=1643 y=458 width=20 height=20 fill=#ff0e14 />
<rect x=1663 y=458 width=20 height=20 fill=#ff090e />
<rect x=1683 y=458 width=20 height=20 fill=#ff0409 />
<rect x=1703 y=458 width=20 height=20 fill=#ff0005 />
<rect x=1723 y=458 width=20 height=20 fill=#ff0001 />
<rect x=1303 y=478 width=20 height=20 fill=#00c4ff />
<rect x=1323 y=478 width=20 height=20 fill=#00c1ff />
<rect x=1343 y=478 width=20 height=20 fill=#04beff />
<rect x=1363 y=478 width=20 height=20 fill=#33bbff />
<rect x=1383 y=478 width=20 height=20 fill=#68b7ff />
<rect x=1403 y=478 width=20 height=20 fill=#a2b3ff />
<rect x=1423 y=478 width=20 height=20 fill=#e4aeff />
<rect x=1443 y=478 width=20 height=20 fill=#ff8fd7 />
<rect x=1463 y=478 width=20 height=20 fill=#ff6ca8 />
<rect x=1483 y=478 width=20 height=20 fill=#ff5387 />
<rect x=1503 y=478 width=20 height=20 fill=#ff406e />
<rect x=1523 y=478 width=20 height=20 fill=#ff315a />
<rect x=1543 y=478 width=20 height=20 fill=#ff264a />
<rect x=1563 y=478 width=20 height=20 fill=#ff1c3d />
<rect x=1583 y=478 width=20 height=20 fill=#ff1433 />
<rect x=1603 y=478 width=20 height=20 fill=#ff0d2a />
<rect x=1623 y=478 width=20 height=20 fill=#ff0722 />
<rect x=1643 y=478 width=20 height=20 fill=#ff021b />
<rect x=1663 y=478 width=20 height=20 fill=#ff0015 />
<rect x=1683 y=478 width=20 height=20 fill=#ff0010 />
<rect x=1703 y=478 width=20 height=20 fill=#ff000b />
<rect x=1723 y=478 width=20 height=20 fill=#ff0007 />
<rect x=1303 y=498 width=20 height=20 fill=#009cff />
<rect x=1323 y=498 width=20 height=20 fill=#0097ff />
<rect x=1343 y=498 width=20 height=20 fill=#1393ff />
<rect x=1363 y=498 width=20 height=20 fill=#408eff />
<rect x=1383 y=498 width=20 height=20 fill=#7188ff />
<rect x=1403 y=498 width=20 height=20 fill=#a782ff />
<rect x=1423 y=498 width=20 height=20 fill=#e27bff />
<rect x=1443 y=498 width=20 height=20 fill=#ff65de />
<rect x=1463 y=498 width=20 height=20 fill=#ff4bb1 />
<rect x=1483 y=498 width=20 height=20 fill=#ff3790 />
<rect x=1503 y=498 width=20 height=20 fill=#ff2977 />
<rect x=1523 y=498 width=20 height=20 fill=#ff1d63 />
<rect x=1543 y=498 width=20 height=20 fill=#ff1453 />
<rect x=1563 y=498 width=20 height=20 fill=#ff0c46 />
<rect x=1583 y=498 width=20 height=20 fill=#ff053b />
<rect x=1603 y=498 width=20 height=20 fill=#ff0031 />
<rect x=1623 y=498 width=20 height=20 fill=#ff0029 />
<rect x=1643 y=498 width=20 height=20 fill=#ff0022 />
<rect x=1663 y=498 width=20 height=20 fill=#ff001c />
<rect x=1683 y=498 width=20 height=20 fill=#ff0016 />
<rect x=1703 y=498 width=20 height=20 fill=#ff0011 />
<rect x=1303 y=518 width=20 height=20 fill=#0079ff />
<rect x=1323 y=518 width=20 height=20 fill=#0074ff />
<rect x=1343 y=518 width=20 height=20 fill=#216eff />
<rect x=1363 y=518 width=20 height=20 fill=#4b68ff />
<rect x=1383 y=518 width=20 height=20 fill=#7861ff />
<rect x=1403 y=518 width=20 height=20 fill=#aa59ff />
<rect x=1423 y=518 width=20 height=20 fill=#e151ff />
<rect x=1443 y=518 width=20 height=20 fill=#ff41e3 />
<rect x=1463 y=518 width=20 height=20 fill=#ff2db8 />
<rect x=1483 y=518 width=20 height=20 fill=#ff1e98 />
<rect x=1503 y=518 width=20 height=20 fill=#ff137f />
<rect x=1523 y=518 width=20 height=20 fill=#ff0a6b />
<rect x=1543 y=518 width=20 height=20 fill=#ff035b />
<rect x=1563 y=518 width=20 height=20 fill=#ff004e />
<rect x=1583 y=518 width=20 height=20 fill=#ff0042 />
<rect x=1603 y=518 width=20 height=20 fill=#ff0038 />
<rect x=1623 y=518 width=20 height=20 fill=#ff0030 />
<rect x=1643 y=518 width=20 height=20 fill=#ff0029 />
<rect x=1283 y=538 width=20 height=20 fill=#0060ff />
<rect x=1303 y=538 width=20 height=20 fill=#005aff />
<rect x=1323 y=538 width=20 height=20 fill=#0854ff />
<rect x=1343 y=538 width=20 height=20 fill=#2d4eff />
<rect x=1363 y=538 width=20 height=20 fill=#5447ff />
<rect x=1383 y=538 width=20 height=20 fill=#7f3fff />
<rect x=1403 y=538 width=20 height=20 fill=#ad37ff />
<rect x=1423 y=538 width=20 height=20 fill=#df2eff />
<rect x=1443 y=538 width=20 height=20 fill=#ff21e8 />
<rect x=1463 y=538 width=20 height=20 fill=#ff13bf />
<rect x=1483 y=538 width=20 height=20 fill=#ff089f />
<rect x=1503 y=538 width=20 height=20 fill=#ff0087 />
<rect x=1523 y=538 width=20 height=20 fill=#ff0073 />
<rect x=1543 y=538 width=20 height=20 fill=#ff0063 />
<rect x=1563 y=538 width=20 height=20 fill=#ff0055 />
<rect x=1583 y=538 width=20 height=20 fill=#ff0049 />
<rect x=1603 y=538 width=20 height=20 fill=#ff003f />
<rect x=1283 y=558 width=20 height=20 fill=#0046ff />
<rect x=1303 y=558 width=20 height=20 fill=#0040ff />
<rect x=1323 y=558 width=20 height=20 fill=#1439ff />
<rect x=1343 y=558 width=20 height=20 fill=#3732ff />
<rect x=1363 y=558 width=20 height=20 fill=#5c2aff />
<rect x=1383 y=558 width=20 height=20 fill=#8422ff />
<rect x=1403 y=558 width=20 height=20 fill=#b019ff />
<rect x=1423 y=558 width=20 height=20 fill=#de0fff />
<rect x=1443 y=558 width=20 height=20 fill=#ff05ed />
<rect x=1463 y=558 width=20 height=20 fill=#ff00c5 />
<rect x=1483 y=558 width=20 height=20 fill=#ff00a6 />
<rect x=1503 y=558 width=20 height=20 fill=#ff008e />
<rect x=1523 y=558 width=20 height=20 fill=#ff007a />
<rect x=1543 y=558 width=20 height=20 fill=#ff006a />
<rect x=1263 y=578 width=20 height=20 fill=#0034ff />
<rect x=1283 y=578 width=20 height=20 fill=#002eff />
<rect x=1303 y=578 width=20 height=20 fill=#0028ff />
<rect x=1323 y=578 width=20 height=20 fill=#1f21ff />
<rect x=1343 y=578 width=20 height=20 fill=#4019ff />
<rect x=1363 y=578 width=20 height=20 fill=#6311ff />
<rect x=1383 y=578 width=20 height=20 fill=#8908ff />
<rect x=1403 y=578 width=20 height=20 fill=#b200ff />
<rect x=1423 y=578 width=20 height=20 fill=#de00ff />
<rect x=1443 y=578 width=20 height=20 fill=#ff00f1 />
<rect x=1463 y=578 width=20 height=20 fill=#ff00ca />
<rect x=1483 y=578 width=20 height=20 fill=#ff00ac />
<rect x=1503 y=578 width=20 height=20 fill=#ff0094 />
<rect x=1263 y=598 width=20 height=20 fill=#0020ff />
<rect x=1283 y=598 width=20 height=20 fill=#0019ff />
<rect x=1303 y=598 width=20 height=20 fill=#0b12ff />
<rect x=1323 y=598 width=20 height=20 fill=#290bff />
<rect x=1343 y=598 width=20 height=20 fill=#4803ff />
<rect x=1363 y=598 width=20 height=20 fill=#6a00ff />
<rect x=1383 y=598 width=20 height=20 fill=#8d00ff />
<rect x=1403 y=598 width=20 height=20 fill=#b400ff />
<rect x=1423 y=598 width=20 height=20 fill=#dd00ff />
<rect x=1443 y=598 width=20 height=20 fill=#ff00f4 />
<rect x=1263 y=618 width=20 height=20 fill=#000dff />
<rect x=1283 y=618 width=20 height=20 fill=#0006ff />
<rect x=1303 y=618 width=20 height=20 fill=#1500ff />
<rect x=1323 y=618 width=20 height=20 fill=#3100ff />
<rect x=1343 y=618 width=20 height=20 fill=#4f00ff />
<rect x=1363 y=618 width=20 height=20 fill=#6f00ff />
<rect x=1383 y=618 width=20 height=20 fill=#9100ff />
<rect x=1403 y=618 width=20 height=20 fill=#b500ff />
<rect x=1263 y=638 width=20 height=20 fill=#0000ff />
<rect x=1283 y=638 width=20 height=20 fill=#0400ff />
<rect x=1303 y=638 width=20 height=20 fill=#1e00ff />
<rect x=1323 y=638 width=20 height=20 fill=#3900ff />
<rect x=1343 y=638 width=20 height=20 fill=#5600ff />
</g></g></svg>
<canvas id="cv" class="a" style="left:1163px;top:138px" width="744" height="534"></canvas>
<svg class="a" style="left:1120px;top:104px" width="800" height="608" viewBox="1120 104 800 608">
<line x1="1161.4" y1="673" x2="1161.4" y2="680" stroke="#ddd" stroke-width="1.5"/>
<text x="1161.7" y="695.5" fill="#e6e6e6" font-size="17" font-family="Liberation Serif" letter-spacing="0.6" text-anchor="middle">0</text>
<line x1="1250.2" y1="673" x2="1250.2" y2="680" stroke="#ddd" stroke-width="1.5"/>
<text x="1250.5" y="695.5" fill="#e6e6e6" font-size="17" font-family="Liberation Serif" letter-spacing="0.6" text-anchor="middle">0,1</text>
<line x1="1338.9" y1="673" x2="1338.9" y2="680" stroke="#ddd" stroke-width="1.5"/>
<text x="1339.2" y="695.5" fill="#e6e6e6" font-size="17" font-family="Liberation Serif" letter-spacing="0.6" text-anchor="middle">0,2</text>
<line x1="1427.7" y1="673" x2="1427.7" y2="680" stroke="#ddd" stroke-width="1.5"/>
<text x="1428.0" y="695.5" fill="#e6e6e6" font-size="17" font-family="Liberation Serif" letter-spacing="0.6" text-anchor="middle">0,3</text>
<line x1="1516.4" y1="673" x2="1516.4" y2="680" stroke="#ddd" stroke-width="1.5"/>
<text x="1516.7" y="695.5" fill="#e6e6e6" font-size="17" font-family="Liberation Serif" letter-spacing="0.6" text-anchor="middle">0,4</text>
<line x1="1605.2" y1="673" x2="1605.2" y2="680" stroke="#ddd" stroke-width="1.5"/>
<text x="1605.5" y="695.5" fill="#e6e6e6" font-size="17" font-family="Liberation Serif" letter-spacing="0.6" text-anchor="middle">0,5</text>
<line x1="1693.9" y1="673" x2="1693.9" y2="680" stroke="#ddd" stroke-width="1.5"/>
<text x="1694.2" y="695.5" fill="#e6e6e6" font-size="17" font-family="Liberation Serif" letter-spacing="0.6" text-anchor="middle">0,6</text>
<line x1="1782.7" y1="673" x2="1782.7" y2="680" stroke="#ddd" stroke-width="1.5"/>
<text x="1783.0" y="695.5" fill="#e6e6e6" font-size="17" font-family="Liberation Serif" letter-spacing="0.6" text-anchor="middle">0,7</text>
<line x1="1871.4" y1="673" x2="1871.4" y2="680" stroke="#ddd" stroke-width="1.5"/>
<text x="1871.7" y="695.5" fill="#e6e6e6" font-size="17" font-family="Liberation Serif" letter-spacing="0.6" text-anchor="middle">0,8</text>
<line x1="1155" y1="672.8" x2="1162" y2="672.8" stroke="#ddd" stroke-width="1.5"/>
<text x="1155" y="678.3" fill="#e6e6e6" font-size="17" font-family="Liberation Serif" letter-spacing="0.6" text-anchor="end">0</text>
<line x1="1155" y1="609.0" x2="1162" y2="609.0" stroke="#ddd" stroke-width="1.5"/>
<text x="1155" y="614.5" fill="#e6e6e6" font-size="17" font-family="Liberation Serif" letter-spacing="0.6" text-anchor="end">0,1</text>
<line x1="1155" y1="545.3" x2="1162" y2="545.3" stroke="#ddd" stroke-width="1.5"/>
<text x="1155" y="550.8" fill="#e6e6e6" font-size="17" font-family="Liberation Serif" letter-spacing="0.6" text-anchor="end">0,2</text>
<line x1="1155" y1="481.5" x2="1162" y2="481.5" stroke="#ddd" stroke-width="1.5"/>
<text x="1155" y="487.0" fill="#e6e6e6" font-size="17" font-family="Liberation Serif" letter-spacing="0.6" text-anchor="end">0,3</text>
<line x1="1155" y1="417.8" x2="1162" y2="417.8" stroke="#ddd" stroke-width="1.5"/>
<text x="1155" y="423.3" fill="#e6e6e6" font-size="17" font-family="Liberation Serif" letter-spacing="0.6" text-anchor="end">0,4</text>
<line x1="1155" y1="354.0" x2="1162" y2="354.0" stroke="#ddd" stroke-width="1.5"/>
<text x="1155" y="359.5" fill="#e6e6e6" font-size="17" font-family="Liberation Serif" letter-spacing="0.6" text-anchor="end">0,5</text>
<line x1="1155" y1="290.2" x2="1162" y2="290.2" stroke="#ddd" stroke-width="1.5"/>
<text x="1155" y="295.7" fill="#e6e6e6" font-size="17" font-family="Liberation Serif" letter-spacing="0.6" text-anchor="end">0,6</text>
<line x1="1155" y1="226.5" x2="1162" y2="226.5" stroke="#ddd" stroke-width="1.5"/>
<text x="1155" y="232.0" fill="#e6e6e6" font-size="17" font-family="Liberation Serif" letter-spacing="0.6" text-anchor="end">0,7</text>
<line x1="1155" y1="162.7" x2="1162" y2="162.7" stroke="#ddd" stroke-width="1.5"/>
<text x="1155" y="168.2" fill="#e6e6e6" font-size="17" font-family="Liberation Serif" letter-spacing="0.6" text-anchor="end">0,8</text>
</svg>
<div class="a" style="left:1644px;top:138px;width:262px;height:211px;background:#2a2a2a"></div>
<div class="a" style="left:1648px;top:144px;width:253px;height:201px;border:2px solid #8a8a8a;background:#000"></div>
<svg class="a" style="left:1650px;top:146px" width="249" height="197"><defs><linearGradient id="ia" x1="0" y1="0" x2="1" y2="1"><stop offset="0" stop-color="#649600"/><stop offset="0.5" stop-color="#949400"/><stop offset="1" stop-color="#9a6c00"/></linearGradient><linearGradient id="ib" x1="0" y1="0.2" x2="1" y2="1"><stop offset="0" stop-color="#b0ff00"/><stop offset="0.45" stop-color="#ffff10"/><stop offset="1" stop-color="#ffb400"/></linearGradient></defs><rect width="249" height="197" fill="url(#ia)"/><path d="M0 19 L249 176 L249 197 L0 197 Z" fill="url(#ib)"/></svg>
<canvas id="cv2" class="a" style="left:1650px;top:146px" width="249" height="197"></canvas>
<svg class="a" style="left:1163px;top:138px" width="744" height="534" viewBox="1163 138 744 534">
<rect x="1419.5" y="282.0" width="14" height="14" fill="none" stroke="#fff" stroke-width="2"/>
<rect x="1423.0" y="319.0" width="14" height="14" fill="none" stroke="#fff" stroke-width="2"/>
<rect x="1424.5" y="353.6" width="14" height="14" fill="none" stroke="#fff" stroke-width="2"/>
<rect x="1427.5" y="385.8" width="14" height="14" fill="none" stroke="#fff" stroke-width="2"/>
<rect x="1429.5" y="420.0" width="14" height="14" fill="none" stroke="#fff" stroke-width="2"/>
<rect x="1526.3" y="342.8" width="14" height="14" fill="none" stroke="#fff" stroke-width="2"/>
<rect x="1505.8" y="366.8" width="14" height="14" fill="none" stroke="#fff" stroke-width="2"/>
<rect x="1488.4" y="387.2" width="14" height="14" fill="none" stroke="#fff" stroke-width="2"/>
<rect x="1470.0" y="407.9" width="14" height="14" fill="none" stroke="#fff" stroke-width="2"/>
<rect x="1451.3" y="431.7" width="14" height="14" fill="none" stroke="#fff" stroke-width="2"/>
<rect x="1721.9" y="453.9" width="14" height="14" fill="none" stroke="#fff" stroke-width="2"/>
<rect x="1657.5" y="453.9" width="14" height="14" fill="none" stroke="#fff" stroke-width="2"/>
<rect x="1601.3" y="453.9" width="14" height="14" fill="none" stroke="#fff" stroke-width="2"/>
<rect x="1548.4" y="453.9" width="14" height="14" fill="none" stroke="#fff" stroke-width="2"/>
<rect x="1488.3" y="453.9" width="14" height="14" fill="none" stroke="#fff" stroke-width="2"/>
<rect x="1353.2" y="455.6" width="14" height="14" fill="none" stroke="#fff" stroke-width="2"/>
<rect x="1370.0" y="455.6" width="14" height="14" fill="none" stroke="#fff" stroke-width="2"/>
<rect x="1385.7" y="455.6" width="14" height="14" fill="none" stroke="#fff" stroke-width="2"/>
<rect x="1401.2" y="455.6" width="14" height="14" fill="none" stroke="#fff" stroke-width="2"/>
<rect x="1417.0" y="455.6" width="14" height="14" fill="none" stroke="#fff" stroke-width="2"/>
<rect x="1286.5" y="626.0" width="14" height="14" fill="none" stroke="#fff" stroke-width="2"/>
<rect x="1318.0" y="589.0" width="14" height="14" fill="none" stroke="#fff" stroke-width="2"/>
<rect x="1346.5" y="557.3" width="14" height="14" fill="none" stroke="#fff" stroke-width="2"/>
<rect x="1374.5" y="523.8" width="14" height="14" fill="none" stroke="#fff" stroke-width="2"/>
<rect x="1402.5" y="489.8" width="14" height="14" fill="none" stroke="#fff" stroke-width="2"/>
<rect x="1438.3" y="566.9" width="14" height="14" fill="none" stroke="#fff" stroke-width="2"/>
<rect x="1436.8" y="542.9" width="14" height="14" fill="none" stroke="#fff" stroke-width="2"/>
<rect x="1435.3" y="521.1" width="14" height="14" fill="none" stroke="#fff" stroke-width="2"/>
<rect x="1435.3" y="501.4" width="14" height="14" fill="none" stroke="#fff" stroke-width="2"/>
<rect x="1434.0" y="477.7" width="14" height="14" fill="none" stroke="#fff" stroke-width="2"/>
<rect x="1432.5" y="455.4" width="14" height="14" fill="none" stroke="#000" stroke-width="2"/>
<circle cx="1436.5" cy="288.0" r="4.6" fill="#5cb05c" stroke="#111" stroke-width="1.3"/>
<circle cx="1434.5" cy="282.0" r="4.6" fill="#22bb22" stroke="#111" stroke-width="1.3"/>
<circle cx="1434.5" cy="318.7" r="4.6" fill="#6aa86a" stroke="#111" stroke-width="1.3"/>
<circle cx="1434.5" cy="355.8" r="4.6" fill="#78a878" stroke="#111" stroke-width="1.3"/>
<circle cx="1434.5" cy="413.9" r="4.6" fill="#88a888" stroke="#111" stroke-width="1.3"/>
<circle cx="1525.5" cy="346.8" r="4.6" fill="#c0bc50" stroke="#111" stroke-width="1.3"/>
<circle cx="1530.5" cy="336.0" r="4.6" fill="#c8b800" stroke="#111" stroke-width="1.3"/>
<circle cx="1509.2" cy="367.8" r="4.6" fill="#b8b868" stroke="#111" stroke-width="1.3"/>
<circle cx="1486.4" cy="395.8" r="4.6" fill="#b4b478" stroke="#111" stroke-width="1.3"/>
<circle cx="1458.3" cy="434.3" r="4.6" fill="#b0b090" stroke="#111" stroke-width="1.3"/>
<circle cx="1710.4" cy="455.1" r="4.6" fill="#c04848" stroke="#111" stroke-width="1.3"/>
<circle cx="1719.5" cy="455.1" r="4.6" fill="#cc1010" stroke="#111" stroke-width="1.3"/>
<circle cx="1669.3" cy="453.8" r="4.6" fill="#c05c5c" stroke="#111" stroke-width="1.3"/>
<circle cx="1602.5" cy="456.3" r="4.6" fill="#c06c6c" stroke="#111" stroke-width="1.3"/>
<circle cx="1519.4" cy="459.5" r="4.6" fill="#b88888" stroke="#111" stroke-width="1.3"/>
<circle cx="1368.5" cy="471.3" r="4.6" fill="#48b0b0" stroke="#111" stroke-width="1.3"/>
<circle cx="1359.4" cy="477.4" r="4.6" fill="#10b0b0" stroke="#111" stroke-width="1.3"/>
<circle cx="1379.7" cy="471.3" r="4.6" fill="#60acac" stroke="#111" stroke-width="1.3"/>
<circle cx="1397.6" cy="468.2" r="4.6" fill="#80acac" stroke="#111" stroke-width="1.3"/>
<circle cx="1412.5" cy="468.2" r="4.6" fill="#98acac" stroke="#111" stroke-width="1.3"/>
<circle cx="1309.6" cy="620.9" r="4.6" fill="#5050c8" stroke="#111" stroke-width="1.3"/>
<circle cx="1298.4" cy="634.4" r="4.6" fill="#0000cc" stroke="#111" stroke-width="1.3"/>
<circle cx="1331.5" cy="594.5" r="4.6" fill="#6464c0" stroke="#111" stroke-width="1.3"/>
<circle cx="1361.7" cy="557.3" r="4.6" fill="#7878c0" stroke="#111" stroke-width="1.3"/>
<circle cx="1397.6" cy="510.0" r="4.6" fill="#9090b0" stroke="#111" stroke-width="1.3"/>
<circle cx="1431.6" cy="572.0" r="4.6" fill="#b848b8" stroke="#111" stroke-width="1.3"/>
<circle cx="1428.5" cy="579.7" r="4.6" fill="#c010c0" stroke="#111" stroke-width="1.3"/>
<circle cx="1431.6" cy="553.0" r="4.6" fill="#b868b8" stroke="#111" stroke-width="1.3"/>
<circle cx="1431.6" cy="531.9" r="4.6" fill="#b080b0" stroke="#111" stroke-width="1.3"/>
<circle cx="1433.4" cy="495.0" r="4.6" fill="#b098b0" stroke="#111" stroke-width="1.3"/>
<circle cx="1431.3" cy="465.6" r="4.6" fill="#ffffff" stroke="#111" stroke-width="1.3"/>
<rect x="1765.4" y="236.6" width="14" height="14" fill="none" stroke="#fff" stroke-width="2"/>
<circle cx="1752.4" cy="168" r="4.6" fill="#c8b400" stroke="#111" stroke-width="1.3"/>
<circle cx="1730.3" cy="227.3" r="4.6" fill="#c0b850" stroke="#111" stroke-width="1.3"/>
</svg>
<script>
(function(){
function col(x,y){
  if(y<=0.0001) y=0.0001;
  var X=x/y, Z=(1-x-y)/y;
  var r=3.2406*X-1.5372-0.4986*Z, g=-0.9689*X+1.8758+0.0415*Z, b=0.0557*X-0.2040+1.0570*Z;
  var inside = r>=0&&g>=0&&b>=0;
  r=Math.max(r,0); g=Math.max(g,0); b=Math.max(b,0);
  var m=Math.max(r,g,b); if(m<=0) m=1;
  r/=m; g/=m; b/=m;
  var G=window.CIEG||1;
  r=Math.pow(r,G); g=Math.pow(g,G); b=Math.pow(b,G);
  var f = inside?1.0:0.6;
  return [r*255*f, g*255*f, b*255*f];
}
function cr(pts, n){ // catmull-rom
  var out=[];
  for(var i=0;i<pts.length-1;i++){
    var p0=pts[Math.max(i-1,0)], p1=pts[i], p2=pts[i+1], p3=pts[Math.min(i+2,pts.length-1)];
    for(var t=0;t<n;t++){
      var u=t/n, u2=u*u, u3=u2*u;
      out.push([0.5*((2*p1[0])+(-p0[0]+p2[0])*u+(2*p0[0]-5*p1[0]+4*p2[0]-p3[0])*u2+(-p0[0]+3*p1[0]-3*p2[0]+p3[0])*u3),
                0.5*((2*p1[1])+(-p0[1]+p2[1])*u+(2*p0[1]-5*p1[1]+4*p2[1]-p3[1])*u2+(-p0[1]+3*p1[1]-3*p2[1]+p3[1])*u3)]);
    }
  }
  out.push(pts[pts.length-1]);
  return out;
}
var X0=1161.4, SX=887.5, Y0=672.8, SY=637.6;
function px(x,y){return [X0+x*SX, Y0-y*SY];}
var path=[[1314.8,671.9],[1307.1,665.7],[1299.7,659.3],[1292.6,652.7],[1285.9,645.9],[1279.4,639.0],[1273.2,632.0],[1267.4,624.8],[1261.8,617.4],[1256.4,609.9],[1251.3,602.3],[1246.5,594.6],[1241.9,586.7],[1237.5,578.7],[1233.3,570.6],[1229.3,562.4],[1225.6,554.1],[1222.0,545.7],[1218.6,537.2],[1215.4,528.6],[1212.3,519.9],[1209.4,511.1],[1206.6,502.3],[1203.9,493.4],[1201.4,484.5],[1199.0,475.4],[1196.6,466.4],[1194.4,457.3],[1192.3,448.1],[1190.2,438.9],[1188.2,429.7],[1186.2,420.4],[1184.3,411.2],[1182.4,401.9],[1180.5,392.6],[1178.7,383.3],[1176.9,374.0],[1175.0,364.6],[1173.3,355.3],[1171.6,346.0],[1169.9,336.7],[1168.4,327.5],[1167.0,318.2],[1165.8,308.9],[1164.8,299.7],[1164.0,290.5],[1163.4,281.3],[1163.1,272.1],[1163.0,263.0],[1163.3,253.9],[1163.9,244.8],[1164.9,235.7],[1166.2,226.7],[1167.9,217.7],[1170.1,208.8],[1172.7,199.9],[1175.8,191.1],[1179.4,182.2],[1183.5,173.5],[1188.2,165.1],[1193.6,157.3],[1199.7,150.6],[1206.6,145.5],[1214.5,142.2],[1223.2,141.0],[1232.4,141.3],[1241.8,142.5],[1251.1,144.0],[1260.3,145.9],[1269.3,148.1],[1278.3,150.7],[1287.1,153.5],[1295.9,156.6],[1304.5,159.9],[1313.1,163.5],[1321.6,167.3],[1330.0,171.3],[1338.3,175.5],[1346.5,179.9],[1354.7,184.4],[1362.8,189.1],[1370.9,194.0],[1378.9,198.9],[1386.8,203.9],[1394.7,209.0],[1402.6,214.2],[1410.4,219.4],[1418.2,224.7],[1426.0,230.0],[1433.8,235.2],[1441.5,240.5],[1449.2,245.8],[1457.0,251.0],[1464.7,256.3],[1472.3,261.6],[1480.0,266.8],[1487.7,272.1],[1495.3,277.3],[1502.9,282.6],[1510.6,287.9],[1518.2,293.1],[1525.8,298.4],[1533.4,303.7],[1541.0,309.0],[1548.5,314.3],[1556.1,319.6],[1563.7,324.9],[1571.3,330.2],[1578.8,335.5],[1586.4,340.9],[1594.0,346.2],[1601.5,351.6],[1609.1,357.0],[1616.6,362.4],[1624.2,367.8],[1631.8,373.2],[1639.3,378.6],[1646.9,384.1],[1654.5,389.5],[1662.0,395.0],[1669.6,400.5],[1677.2,406.0],[1684.8,411.4],[1692.3,416.9],[1699.9,422.4],[1707.5,427.9],[1715.0,433.3],[1722.6,438.8],[1730.2,444.3],[1737.8,449.7],[1745.3,455.2],[1752.9,460.6],[1760.5,466.0],[1768.0,471.4],[1775.6,476.8],[1783.2,482.2],[1790.7,487.5],[1798.3,492.8],[1805.9,498.1],[1813.4,503.4]];
var cv=document.getElementById('cv'); var ctx=cv.getContext('2d');
var W=cv.width,H=cv.height, OX=1163, OY=138;
var off=document.createElement('canvas'); off.width=W; off.height=H;
var oc=off.getContext('2d'); var im=oc.createImageData(W,H); var d=im.data;
for(var j=0;j<H;j++){for(var i2=0;i2<W;i2++){
  var k=(j*W+i2)*4, R=0,G=0,B=0;
  for(var sy=0;sy<2;sy++)for(var sx=0;sx<2;sx++){
    var c=col((OX+i2+0.25+sx*0.5-X0)/SX,(Y0-(OY+j+0.25+sy*0.5))/SY); R+=c[0];G+=c[1];B+=c[2];}
  d[k]=R/4; d[k+1]=G/4; d[k+2]=B/4; d[k+3]=255;
}}
oc.putImageData(im,0,0);
ctx.save(); ctx.beginPath();
for(var i3=0;i3<path.length;i3++){var p=path[i3]; if(i3==0) ctx.moveTo(p[0]-OX,p[1]-OY); else ctx.lineTo(p[0]-OX,p[1]-OY);}
ctx.closePath(); ctx.clip(); ctx.drawImage(off,0,0); ctx.restore();
// inset
var cv2=document.getElementById('cv2'); var c2=cv2.getContext('2d');
var W2=cv2.width,H2=cv2.height; var im2=c2.createImageData(W2,H2); var d2=im2.data;
var IX=1772.4, IY=243.6, ISX=4650, ISY=3700, tx=0.4193, ty=0.5053;
for(var j=0;j<H2;j++){for(var i2=0;i2<W2;i2++){
  var k=(j*W2+i2)*4, R=0,G=0,B=0;
  for(var sy=0;sy<2;sy++)for(var sx=0;sx<2;sx++){
    var c=col(tx+(1650+i2+0.25+sx*0.5-IX)/ISX, ty-(146+j+0.25+sy*0.5-IY)/ISY); R+=c[0];G+=c[1];B+=c[2];}
  d2[k]=R/4; d2[k+1]=G/4; d2[k+2]=B/4; d2[k+3]=255;
}}
c2.putImageData(im2,0,0);
})();
</script>
<div class="a" style="left:16px;top:747px;font-size:32px;color:#f2f2f2;white-space:nowrap;letter-spacing:1.25px">Current Reading</div>
<div class="a" style="left:17px;top:797.0px;font-size:26px;line-height:30px;color:#f2f2f2;white-space:nowrap;letter-spacing:0.1px;transform:scaleX(1.11);transform-origin:0 0">x: 0,415</div>
<div class="a" style="left:17px;top:841.5px;font-size:26px;line-height:30px;color:#f2f2f2;white-space:nowrap;letter-spacing:0.1px;transform:scaleX(1.11);transform-origin:0 0">y: 0,5242</div>
<div class="a" style="left:17px;top:886.5px;font-size:26px;line-height:30px;color:#f2f2f2;white-space:nowrap;letter-spacing:0.1px;transform:scaleX(1.11);transform-origin:0 0">fL: 49,6</div>
<div class="a" style="left:17px;top:930.0px;font-size:26px;line-height:30px;color:#f2f2f2;white-space:nowrap;letter-spacing:0.1px;transform:scaleX(1.11);transform-origin:0 0">cd/m<span style="font-size:30px;line-height:20px">&#178;</span>: 169,93</div>
<svg class="a" style="left:360px;top:725px" width="360" height="250" viewBox="360 725 360 250">
<defs>
<linearGradient id="rr" x1="0" x2="0" y1="0" y2="1"><stop offset="0" stop-color="#ff2020"/><stop offset="0.5" stop-color="#f00000"/><stop offset="1" stop-color="#a00000"/></linearGradient>
<linearGradient id="gg" x1="0" x2="0" y1="0" y2="1"><stop offset="0" stop-color="#109010"/><stop offset="1" stop-color="#006000"/></linearGradient>
<linearGradient id="bb" x1="0" x2="0" y1="0" y2="1"><stop offset="0" stop-color="#1818ff"/><stop offset="0.55" stop-color="#0000f0"/><stop offset="1" stop-color="#000080"/></linearGradient>
</defs>
<rect x="407" y="753" width="291" height="196" fill="#232323"/>
<line x1="401" y1="773.6" x2="698" y2="773.6" stroke="#8a8a8a" stroke-width="2"/>
<text x="400.5" y="779.9" fill="#ddd" font-size="16.5" text-anchor="end">40</text>
<line x1="401" y1="813.0" x2="698" y2="813.0" stroke="#8a8a8a" stroke-width="2"/>
<text x="400.5" y="819.3" fill="#ddd" font-size="16.5" text-anchor="end">20</text>
<line x1="401" y1="852.4" x2="698" y2="852.4" stroke="#8a8a8a" stroke-width="2"/>
<text x="400.5" y="858.7" fill="#ddd" font-size="16.5" text-anchor="end">0</text>
<line x1="401" y1="891.8" x2="698" y2="891.8" stroke="#8a8a8a" stroke-width="2"/>
<text x="400.5" y="898.1" fill="#ddd" font-size="16.5" text-anchor="end">-20</text>
<line x1="401" y1="931.2" x2="698" y2="931.2" stroke="#8a8a8a" stroke-width="2"/>
<text x="400.5" y="937.5" fill="#ddd" font-size="16.5" text-anchor="end">-40</text>
<rect x="407" y="753" width="291" height="196" fill="none" stroke="#8a8a8a" stroke-width="2"/>
<line x1="407" y1="949" x2="407" y2="956" stroke="#ddd" stroke-width="2"/>
<line x1="698" y1="949" x2="698" y2="956" stroke="#ddd" stroke-width="2"/>
<rect x="437" y="852.4" width="76.5" height="17.5" fill="url(#rr)" stroke="#000" stroke-width="1.6"/>
<rect x="514.5" y="845" width="77.5" height="7.4" fill="url(#gg)" stroke="#000" stroke-width="1.6"/>
<rect x="593.5" y="852.4" width="76.5" height="83.8" fill="url(#bb)" stroke="#000" stroke-width="1.6"/>
<text x="537" y="747" fill="#ddd" font-size="15.5" letter-spacing="0.4" text-anchor="middle">RGB Balance</text>
<text x="553" y="967" fill="#ddd" font-size="16" text-anchor="middle">100%</text>
</svg>
<style>.tb{font-size:21px;line-height:24px;color:#f4f4f4;white-space:nowrap;letter-spacing:1.9px}</style>
<div class="a" style="left:723px;top:728px;width:830px;height:32px;background:linear-gradient(#2e2e2e,#262626 45%,#111 55%,#0e0e0e)"></div>
<div class="a" style="left:723px;top:728px;width:23px;height:32px;background:#000"></div>
<div class="a tb" style="left:937.5px;top:733px;font-weight:bold">20%</div>
<div class="a tb" style="left:1061.6px;top:733px;font-weight:bold">40%</div>
<div class="a tb" style="left:1186.0px;top:733px;font-weight:bold">60%</div>
<div class="a tb" style="left:1311.0px;top:733px;font-weight:bold">80%</div>
<div class="a tb" style="left:1435.6px;top:733px;font-weight:bold">100%</div>
<div class="a" style="left:723px;top:760px;width:830px;height:32px;background:#3c3c3c"></div>
<div class="a" style="left:723px;top:760px;width:23px;height:32px;background:#232323"></div>
<div class="a tb" style="left:753px;top:765px;letter-spacing:0.3px;transform:scaleX(1.13);transform-origin:0 0">x: CIE31</div>
<div class="a tb" style="left:937.5px;top:765px;letter-spacing:0.2px;transform:scaleX(1.2);transform-origin:0 0">0,3340</div>
<div class="a tb" style="left:1061.6px;top:765px;letter-spacing:0.2px;transform:scaleX(1.2);transform-origin:0 0">0,3671</div>
<div class="a tb" style="left:1186.0px;top:765px;letter-spacing:0.2px;transform:scaleX(1.2);transform-origin:0 0">0,3920</div>
<div class="a tb" style="left:1311.0px;top:765px;letter-spacing:0.2px;transform:scaleX(1.2);transform-origin:0 0">0,4107</div>
<div class="a tb" style="left:1435.6px;top:765px;letter-spacing:0.2px;transform:scaleX(1.2);transform-origin:0 0">0,4150</div>
<div class="a" style="left:723px;top:792px;width:830px;height:31px;background:#838383"></div>
<div class="a" style="left:723px;top:792px;width:23px;height:31px;background:#232323"></div>
<div class="a tb" style="left:753px;top:797px;letter-spacing:0.3px;transform:scaleX(1.13);transform-origin:0 0">y: CIE31</div>
<div class="a tb" style="left:937.5px;top:797px;letter-spacing:0.2px;transform:scaleX(1.2);transform-origin:0 0">0,3729</div>
<div class="a tb" style="left:1061.6px;top:797px;letter-spacing:0.2px;transform:scaleX(1.2);transform-origin:0 0">0,4314</div>
<div class="a tb" style="left:1186.0px;top:797px;letter-spacing:0.2px;transform:scaleX(1.2);transform-origin:0 0">0,4757</div>
<div class="a tb" style="left:1311.0px;top:797px;letter-spacing:0.2px;transform:scaleX(1.2);transform-origin:0 0">0,5093</div>
<div class="a tb" style="left:1435.6px;top:797px;letter-spacing:0.2px;transform:scaleX(1.2);transform-origin:0 0">0,5242</div>
<div class="a" style="left:723px;top:823px;width:830px;height:31px;background:#3c3c3c"></div>
<div class="a" style="left:723px;top:823px;width:23px;height:31px;background:#232323"></div>
<div class="a tb" style="left:753px;top:828px;letter-spacing:0.3px;transform:scaleX(1.13);transform-origin:0 0">Y</div>
<div class="a tb" style="left:937.5px;top:828px;letter-spacing:0.2px;transform:scaleX(1.2);transform-origin:0 0">178,8047</div>
<div class="a tb" style="left:1061.6px;top:828px;letter-spacing:0.2px;transform:scaleX(1.2);transform-origin:0 0">174,4598</div>
<div class="a tb" style="left:1186.0px;top:828px;letter-spacing:0.2px;transform:scaleX(1.2);transform-origin:0 0">173,9200</div>
<div class="a tb" style="left:1311.0px;top:828px;letter-spacing:0.2px;transform:scaleX(1.2);transform-origin:0 0">172,2064</div>
<div class="a tb" style="left:1435.6px;top:828px;letter-spacing:0.2px;transform:scaleX(1.2);transform-origin:0 0">169,9282</div>
<div class="a" style="left:723px;top:854px;width:830px;height:32px;background:#838383"></div>
<div class="a" style="left:723px;top:854px;width:23px;height:32px;background:#232323"></div>
<div class="a tb" style="left:753px;top:859px;letter-spacing:0.3px;transform:scaleX(1.13);transform-origin:0 0">Target x:CIE31</div>
<div class="a tb" style="left:937.5px;top:859px;letter-spacing:0.2px;transform:scaleX(1.2);transform-origin:0 0">0,3344</div>
<div class="a tb" style="left:1061.6px;top:859px;letter-spacing:0.2px;transform:scaleX(1.2);transform-origin:0 0">0,3564</div>
<div class="a tb" style="left:1186.0px;top:859px;letter-spacing:0.2px;transform:scaleX(1.2);transform-origin:0 0">0,3773</div>
<div class="a tb" style="left:1311.0px;top:859px;letter-spacing:0.2px;transform:scaleX(1.2);transform-origin:0 0">0,3969</div>
<div class="a tb" style="left:1435.6px;top:859px;letter-spacing:0.2px;transform:scaleX(1.2);transform-origin:0 0">0,4193</div>
<div class="a" style="left:723px;top:886px;width:830px;height:31px;background:#3c3c3c"></div>
<div class="a" style="left:723px;top:886px;width:23px;height:31px;background:#232323"></div>
<div class="a tb" style="left:753px;top:891px;letter-spacing:0.3px;transform:scaleX(1.13);transform-origin:0 0">Target y:CIE31</div>
<div class="a tb" style="left:937.5px;top:891px;letter-spacing:0.2px;transform:scaleX(1.2);transform-origin:0 0">0,3648</div>
<div class="a tb" style="left:1061.6px;top:891px;letter-spacing:0.2px;transform:scaleX(1.2);transform-origin:0 0">0,4013</div>
<div class="a tb" style="left:1186.0px;top:891px;letter-spacing:0.2px;transform:scaleX(1.2);transform-origin:0 0">0,4358</div>
<div class="a tb" style="left:1311.0px;top:891px;letter-spacing:0.2px;transform:scaleX(1.2);transform-origin:0 0">0,4682</div>
<div class="a tb" style="left:1435.6px;top:891px;letter-spacing:0.2px;transform:scaleX(1.2);transform-origin:0 0">0,5053</div>
<div class="a" style="left:723px;top:917px;width:830px;height:31px;background:#838383"></div>
<div class="a" style="left:723px;top:917px;width:23px;height:31px;background:#232323"></div>
<div class="a tb" style="left:753px;top:922px;letter-spacing:0.3px;transform:scaleX(1.13);transform-origin:0 0">Target Y</div>
<div class="a tb" style="left:937.5px;top:922px;letter-spacing:0.2px;transform:scaleX(1.2);transform-origin:0 0">178,7867</div>
<div class="a tb" style="left:1061.6px;top:922px;letter-spacing:0.2px;transform:scaleX(1.2);transform-origin:0 0">175,6484</div>
<div class="a tb" style="left:1186.0px;top:922px;letter-spacing:0.2px;transform:scaleX(1.2);transform-origin:0 0">173,2372</div>
<div class="a tb" style="left:1311.0px;top:922px;letter-spacing:0.2px;transform:scaleX(1.2);transform-origin:0 0">171,3448</div>
<div class="a tb" style="left:1435.6px;top:922px;letter-spacing:0.2px;transform:scaleX(1.2);transform-origin:0 0">169,5153</div>
<div class="a" style="left:0;top:977px;width:1920px;height:63px;background:linear-gradient(#474747,#2c2c2c)"></div>
<div class="a" style="left:0;top:1040px;width:1920px;height:8px;background:#08161c"></div>
<div class="a" style="left:48px;top:1040px;width:344px;height:8px;background:#333"></div>
<div class="a" style="left:737px;top:1040px;width:48px;height:8px;background:#2c3a42"></div>
<div class="a" style="left:1px;top:978px;width:45px;height:61px;border-radius:4px;background:linear-gradient(#a8a8a8,#6a6a6a)"></div>
<div class="a" style="left:13px;top:980px;width:20px;height:17px;border-radius:50%;background:linear-gradient(#6a6a6a,#9a9a9a)"></div>
<svg class="a" style="left:17px;top:983px" width="12" height="8"><path d="M1 7L6 1L11 7Z" fill="#222"/></svg>
<div class="a" style="left:6px;top:1004px;width:35px;height:30px;border-radius:3px;background:#ffff00;border:1px solid #cc0"></div>
<div class="a" style="left:52px;top:978px;width:150px;height:61px;border-radius:4px;background:linear-gradient(#a6a6a6,#6c6c6c)"></div>
<div class="a" style="left:57px;top:983px;width:140px;height:36px;border-radius:3px;background:#c2c2a4;border:1px solid #8a8a6a;box-shadow:inset 1px 1px 1px rgba(0,0,0,0.25)"></div>
<div class="a" style="left:52px;top:1024px;width:150px;text-align:center;font:bold 11px 'Liberation Sans';color:#2a2a2a">20%</div>
<div class="a" style="left:204px;top:978px;width:150px;height:61px;border-radius:4px;background:linear-gradient(#a6a6a6,#6c6c6c)"></div>
<div class="a" style="left:209px;top:983px;width:140px;height:36px;border-radius:3px;background:#c2bf86;border:1px solid #8a8a6a;box-shadow:inset 1px 1px 1px rgba(0,0,0,0.25)"></div>
<div class="a" style="left:204px;top:1024px;width:150px;text-align:center;font:bold 11px 'Liberation Sans';color:#2a2a2a">40%</div>
<div class="a" style="left:356px;top:978px;width:150px;height:61px;border-radius:4px;background:linear-gradient(#a6a6a6,#6c6c6c)"></div>
<div class="a" style="left:361px;top:983px;width:140px;height:36px;border-radius:3px;background:#c2c06c;border:1px solid #8a8a6a;box-shadow:inset 1px 1px 1px rgba(0,0,0,0.25)"></div>
<div class="a" style="left:356px;top:1024px;width:150px;text-align:center;font:bold 11px 'Liberation Sans';color:#2a2a2a">60%</div>
<div class="a" style="left:508px;top:978px;width:150px;height:61px;border-radius:4px;background:linear-gradient(#a6a6a6,#6c6c6c)"></div>
<div class="a" style="left:513px;top:983px;width:140px;height:36px;border-radius:3px;background:#c2c04a;border:1px solid #8a8a6a;box-shadow:inset 1px 1px 1px rgba(0,0,0,0.25)"></div>
<div class="a" style="left:508px;top:1024px;width:150px;text-align:center;font:bold 11px 'Liberation Sans';color:#2a2a2a">80%</div>
<div class="a" style="left:660px;top:978px;width:150px;height:61px;border-radius:4px;background:#202020"></div>
<div class="a" style="left:665px;top:983px;width:140px;height:36px;border-radius:3px;background:#c4c000;border:1px solid #8a8a00"></div>
<div class="a" style="left:660px;top:1024px;width:150px;text-align:center;font:bold 11px 'Liberation Sans';color:#fff">100%</div>
<div class="a" style="left:1596px;top:977px;width:1px;height:63px;background:#2a2a2a"></div>
<div class="a" style="left:1597px;top:978px;width:48px;height:61px;border-radius:4px;background:linear-gradient(#a8a8a8,#707070 30%,#9a9a9a 32%,#6c6c6c)"></div>
<div class="a" style="left:1597px;top:996px;width:48px;height:1px;background:#3a3a3a"></div>
<div class="a" style="left:1611px;top:980px;width:20px;height:15px;border-radius:50%;background:linear-gradient(#6a6a6a,#9a9a9a)"></div>
<svg class="a" style="left:1615px;top:983px" width="12" height="8"><path d="M1 7L6 1L11 7Z" fill="#222"/></svg>
<div class="a" style="left:1605px;top:1002px;width:32px;height:32px;border-radius:4px;border:3px solid #222;background:linear-gradient(#b0b0b0,#8a8a8a)"></div>
<div class="a" style="left:1614px;top:1011px;width:14px;height:14px;background:#000"></div>
<div class="a" style="left:1646px;top:978px;width:226px;height:30px;border-radius:4px 4px 0 0;background:linear-gradient(#a8a8a8,#6e6e6e)"></div>
<div class="a" style="left:1692px;top:978px;width:1px;height:30px;background:#505050"></div>
<div class="a" style="left:1737px;top:978px;width:1px;height:30px;background:#505050"></div>
<div class="a" style="left:1782px;top:978px;width:1px;height:30px;background:#505050"></div>
<div class="a" style="left:1827px;top:978px;width:1px;height:30px;background:#505050"></div>
<div class="a" style="left:1872px;top:978px;width:46px;height:30px;background:linear-gradient(#3a3a3a,#222)"></div>
<div class="a" style="left:1884px;top:982px;width:22px;height:22px;border-radius:50%;background:#282828"></div>
<div class="a" style="left:1659px;top:983px;width:20px;height:20px;border-radius:50%;background:linear-gradient(#808080,#a8a8a8)"></div>
<div class="a" style="left:1705px;top:983px;width:20px;height:20px;border-radius:50%;background:linear-gradient(#808080,#a8a8a8)"></div>
<div class="a" style="left:1750px;top:983px;width:20px;height:20px;border-radius:50%;background:linear-gradient(#808080,#a8a8a8)"></div>
<div class="a" style="left:1795px;top:983px;width:20px;height:20px;border-radius:50%;background:linear-gradient(#808080,#a8a8a8)"></div>
<div class="a" style="left:1840px;top:983px;width:20px;height:20px;border-radius:50%;background:linear-gradient(#808080,#a8a8a8)"></div>
<div class="a" style="left:1664px;top:988px;width:10px;height:10px;background:#222"></div>
<svg class="a" style="left:1710px;top:987px" width="12" height="12"><path d="M2 1L11 6L2 11Z" fill="#222"/></svg>
<div class="a" style="left:1751px;top:985px;font:bold 13px 'Liberation Sans';color:#222">[··]</div>
<div class="a" style="left:1796px;top:982px;font:bold 18px 'Liberation Sans';color:#222">&#8734;</div>
<svg class="a" style="left:1843px;top:986px" width="14" height="14"><path d="M2 7A5 5 0 0 1 11 4M12 7A5 5 0 0 1 3 10" fill="none" stroke="#222" stroke-width="2.4"/><path d="M9 1L13 5L8 6Z M5 13L1 9L6 8Z" fill="#222"/></svg>
<div class="a" style="left:1646px;top:1009px;width:136px;height:30px;border-radius:0 0 0 4px;background:linear-gradient(#a8a8a8,#6e6e6e)"></div>
<div class="a" style="left:1783px;top:1009px;width:135px;height:30px;border-radius:0 0 4px 0;background:linear-gradient(#a8a8a8,#6e6e6e)"></div>
<div class="a" style="left:1667px;top:1014px;width:20px;height:20px;border-radius:50%;background:linear-gradient(#767676,#b0b0b0)"></div>
<div class="a" style="left:1880px;top:1014px;width:20px;height:20px;border-radius:50%;background:linear-gradient(#767676,#b0b0b0)"></div>
<svg class="a" style="left:1671px;top:1018px" width="12" height="12"><path d="M6 1.5L2 6L6 10.5M10.5 1.5L6.5 6L10.5 10.5" fill="none" stroke="#2e2e2e" stroke-width="1.6"/></svg>
<svg class="a" style="left:1884px;top:1018px" width="12" height="12"><path d="M1.5 1.5L5.5 6L1.5 10.5M6 1.5L10 6L6 10.5" fill="none" stroke="#2e2e2e" stroke-width="1.6"/></svg>
<div class="a" style="left:1703px;top:1012px;font:bold 21px 'Liberation Sans';color:#2e2e2e">Back</div>
<div class="a" style="left:1810px;top:1012px;font:bold 21px 'Liberation Sans';color:#2e2e2e">Next</div>
<div class="a" style="left:1378px;top:58px;width:154px;height:30px;border-radius:4px 4px 0 0;background:linear-gradient(#4e4e4e,#6a6a6a);overflow:hidden"><div style="position:absolute;left:0;top:0;width:6px;height:30px;background:#10e010"></div></div>
<div class="a" style="left:1387px;top:60px;font-size:11px;color:#eee;white-space:nowrap;letter-spacing:-0.1px">X-Rite i1Pro 2</div>
<div class="a" style="left:1387px;top:74px;font-size:11px;color:#eee;white-space:nowrap;letter-spacing:-0.1px">LCD Direct View</div>
<div class="a" style="left:1468px;top:63px;width:19px;height:19px;border-radius:50%;background:linear-gradient(#444,#6e6e6e)"></div>
<svg class="a" style="left:1472px;top:70px" width="12" height="8"><path d="M1 1L11 1L6 7Z" fill="#fff"/></svg>
<div class="a" style="left:1497px;top:61px;width:1px;height:27px;background:#3a3a3a"></div>
<div class="a" style="left:1504px;top:60px;width:26px;height:26px;border-radius:50%;background:#0000f0;border:1px solid #aaf"></div>
<div class="a" style="left:1504px;top:66px;width:26px;text-align:center;font:bold 9px 'Liberation Sans';color:#fff">221</div>
<div class="a" style="left:1539px;top:58px;width:129px;height:30px;border-radius:4px 4px 0 0;background:linear-gradient(#4e4e4e,#6a6a6a);overflow:hidden"><div style="position:absolute;left:0;top:0;width:6px;height:30px;background:#10e010"></div></div>
<div class="a" style="left:1548px;top:60px;font-size:11px;color:#eee;white-space:nowrap;letter-spacing:-0.1px">Mobile Forge</div>
<div class="a" style="left:1641px;top:63px;width:19px;height:19px;border-radius:50%;background:linear-gradient(#444,#6e6e6e)"></div>
<svg class="a" style="left:1645px;top:70px" width="12" height="8"><path d="M1 1L11 1L6 7Z" fill="#fff"/></svg>
<div class="a" style="left:1675px;top:58px;width:143px;height:30px;border-radius:4px 4px 0 0;background:linear-gradient(#4e4e4e,#6a6a6a);overflow:hidden"><div style="position:absolute;left:0;top:0;width:6px;height:30px;background:#e8e800"></div></div>
<div class="a" style="left:1684px;top:60px;font-size:11px;color:#eee;white-space:nowrap;letter-spacing:-0.1px">Direct Display Control</div>
<div class="a" style="left:1792px;top:63px;width:19px;height:19px;border-radius:50%;background:linear-gradient(#444,#6e6e6e)"></div>
<svg class="a" style="left:1796px;top:70px" width="12" height="8"><path d="M1 1L11 1L6 7Z" fill="#fff"/></svg>
<div class="a" style="left:1821px;top:58px;width:34px;height:28px;border-radius:4px;border:1px solid #aaa;background:linear-gradient(#8a8a8a,#4e4e4e)"></div>
<div class="a" style="left:1828px;top:62px;width:20px;height:20px;border-radius:50%;background:linear-gradient(#4a4a4a,#7a7a7a)"></div>
<div class="a" style="left:1857px;top:58px;width:34px;height:28px;border-radius:4px;border:1px solid #aaa;background:linear-gradient(#8a8a8a,#4e4e4e)"></div>
<div class="a" style="left:1864px;top:62px;width:20px;height:20px;border-radius:50%;background:linear-gradient(#4a4a4a,#7a7a7a)"></div>
<div class="a" style="left:1893px;top:58px;width:32px;height:28px;border-radius:4px;border:1px solid #aaa;background:linear-gradient(#8a8a8a,#4e4e4e)"></div>
<div class="a" style="left:1899px;top:62px;width:20px;height:20px;border-radius:50%;background:linear-gradient(#4a4a4a,#7a7a7a)"></div>
<div class="a" style="left:1829px;top:61px;font-size:20px;color:#ddd">&#9881;</div>
<div class="a" style="left:1867px;top:61px;font:bold 17px 'Liberation Sans';color:#eee">?</div>
<svg class="a" style="left:1900px;top:66px" width="10" height="12"><path d="M9 1L1 6L9 11Z" fill="#fff"/></svg>
</body></html>
